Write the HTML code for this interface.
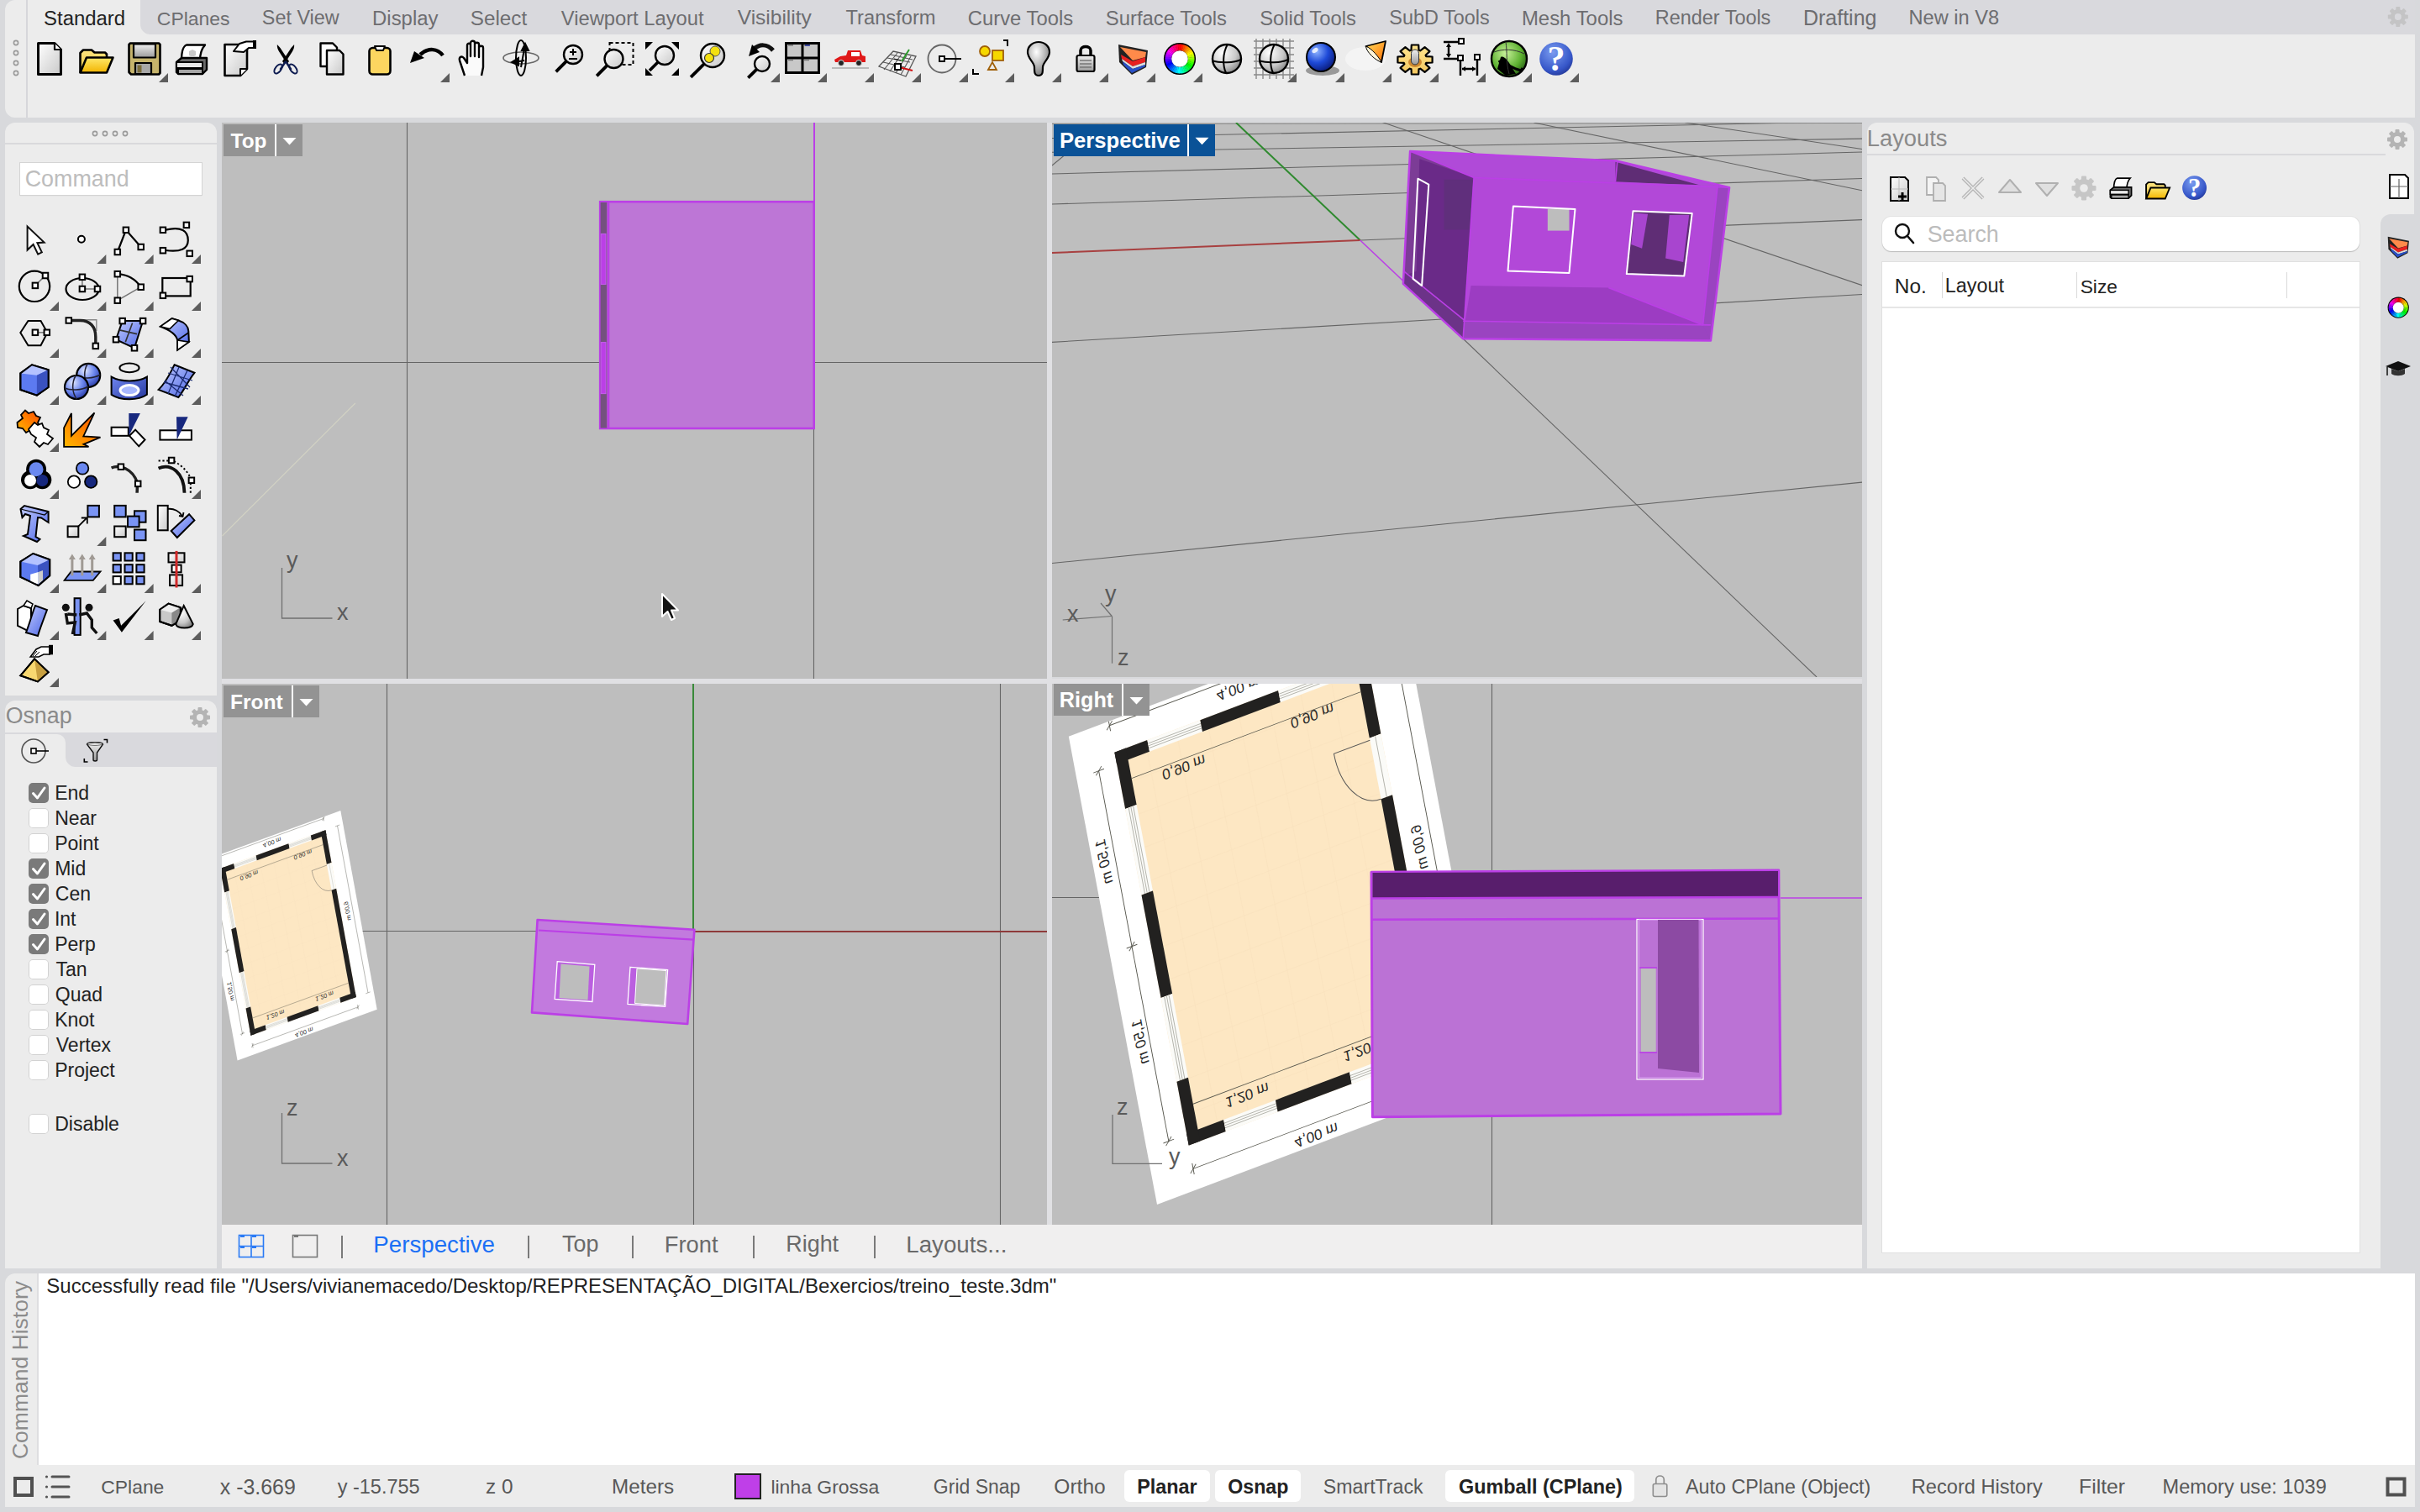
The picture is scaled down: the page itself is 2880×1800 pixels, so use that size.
<!DOCTYPE html><html><head><meta charset="utf-8"><style>
html,body{margin:0;padding:0;}
body{width:2880px;height:1800px;position:relative;overflow:hidden;background:#d8d9dc;font-family:"Liberation Sans", sans-serif;}
</style></head><body>
<div style="position:absolute;left:264px;top:146px;width:982px;height:662px;overflow:hidden;background:#bebebe;"><svg width="982" height="662" viewBox="264 146 982 662" style="position:absolute;left:0;top:0"><line x1="484.5" y1="146" x2="484.5" y2="808" stroke="#656565" stroke-width="1.1"/><line x1="968.5" y1="511" x2="968.5" y2="808" stroke="#656565" stroke-width="1.1"/><line x1="264" y1="431.5" x2="1246" y2="431.5" stroke="#656565" stroke-width="1.1"/><line x1="264.5" y1="638" x2="422.8" y2="480" stroke="#d2d2c4" stroke-width="1.2"/><line x1="969" y1="146" x2="969" y2="240" stroke="#bb3fe6" stroke-width="2"/><rect x="714.2" y="240.2" width="254.5" height="269.8" fill="#bd76d6" stroke="#bb3fe6" stroke-width="2.6"/><rect x="714.6" y="241" width="7.8" height="268.5" fill="#74517f"/><line x1="724" y1="241" x2="724" y2="510" stroke="#bb3fe6" stroke-width="2.6"/><rect x="715.2" y="278.4" width="5.8" height="60" fill="#bb3fe6" stroke="#c55fec" stroke-width="1"/><rect x="715.2" y="407.6" width="5.8" height="61" fill="#bb3fe6" stroke="#c55fec" stroke-width="1"/><path d="M335.5 676 L335.5 736 L395.5 736" fill="none" stroke="#707070" stroke-width="1.3"/><text x="341" y="676" font-size="27" fill="#5a5a5a" font-family="Liberation Sans">y</text><text x="401" y="738" font-size="27" fill="#5a5a5a" font-family="Liberation Sans">x</text><path d="M788 707 L788 734 L794.5 728 L799 738 L803 736 L799 726.5 L807 726.5 Z" fill="#111" stroke="#fff" stroke-width="2" stroke-linejoin="round"/></svg></div>
<div style="position:absolute;left:1252px;top:146px;width:964px;height:660px;overflow:hidden;background:#bebebe;"><svg width="964" height="660" viewBox="1252 146 964 660" style="position:absolute;left:0;top:0"><line x1="1252" y1="407.4" x2="2216" y2="350.524" stroke="#656565" stroke-width="1.05"/><line x1="1618.7" y1="286.0" x2="2216" y2="261.63016" stroke="#656565" stroke-width="1.05"/><line x1="1252" y1="243.0" x2="2216" y2="212.5376" stroke="#656565" stroke-width="1.05"/><line x1="1252" y1="207.0" x2="2216" y2="181.0684" stroke="#656565" stroke-width="1.05"/><line x1="1252" y1="181.2398" x2="2216" y2="165.141" stroke="#656565" stroke-width="1.05"/><line x1="1252" y1="164.574" x2="2216" y2="144.32999999999998" stroke="#656565" stroke-width="1.05"/><line x1="1252" y1="670.5" x2="2216" y2="574.1" stroke="#656565" stroke-width="1.05"/><line x1="1252" y1="147.5" x2="2216" y2="146.5" stroke="#8a8a8a" stroke-width="1"/><line x1="1560" y1="116.6" x2="2216" y2="339.64" stroke="#656565" stroke-width="1.05"/><line x1="1825.4" y1="146.0" x2="2216" y2="226.69795999999997" stroke="#656565" stroke-width="1.05"/><line x1="2005.5" y1="146.0" x2="2216" y2="177.575" stroke="#656565" stroke-width="1.05"/><line x1="1741" y1="403" x2="2162" y2="806" stroke="#656565" stroke-width="1.05"/><line x1="1252" y1="197" x2="1275" y2="178" stroke="#656565" stroke-width="1.05"/><line x1="1471" y1="146" x2="1618.7" y2="286" stroke="#2f8a2f" stroke-width="2"/><line x1="1252" y1="301" x2="1618.7" y2="286" stroke="#a84040" stroke-width="2"/><line x1="1618.7" y1="286" x2="1669.4" y2="334" stroke="#bb3fe6" stroke-width="1.6"/><line x1="1264.7" y1="738" x2="1323.2" y2="733.5" stroke="#707070" stroke-width="1.2"/><line x1="1310" y1="718" x2="1323.2" y2="733.5" stroke="#707070" stroke-width="1.2"/><line x1="1323.5" y1="733.5" x2="1323.5" y2="789.7" stroke="#707070" stroke-width="1.2"/><text x="1270" y="740" font-size="27" fill="#5a5a5a" font-family="Liberation Sans">x</text><text x="1315" y="716" font-size="27" fill="#5a5a5a" font-family="Liberation Sans">y</text><text x="1330" y="792" font-size="27" fill="#5a5a5a" font-family="Liberation Sans">z</text><polygon points="1678.1,179.9 1924.8,191.6 2058.1,223.2 2035.9,405.6 1741.2,403.3 1669.9,337.8" fill="#b04ad8" stroke="none" stroke-width="0" fill-opacity="1" stroke-linejoin="round"/><polygon points="1678.1,179.9 1754.1,211.5 1741.2,403.3 1669.9,337.8" fill="#7c3c96" stroke="none" stroke-width="0" fill-opacity="1" stroke-linejoin="round"/><polygon points="1689.3,189.3 1752.9,210.8 1742.6,381.1 1675.7,326.6 1685.6,323.1" fill="#6a2a88" stroke="none" stroke-width="0" fill-opacity="1" stroke-linejoin="round"/><polygon points="1718.5,213.8 1752.9,213.8 1749.4,273.5 1718.5,273.5" fill="#5e3278" stroke="none" stroke-width="0" fill-opacity="0.75" stroke-linejoin="round"/><polygon points="1922.5,192.8 2024.2,220.8 1922.5,216.2" fill="#5f2d75" stroke="none" stroke-width="0" fill-opacity="1" stroke-linejoin="round"/><polygon points="1754.1,211.5 2044.1,220.8 2026.6,386.9 1743.6,382.2" fill="#b248d8" stroke="none" stroke-width="0" fill-opacity="1" stroke-linejoin="round"/><polygon points="1750.6,340.1 1914.3,342.5 2026.6,386.9 1743.6,382.2" fill="#9c3cc2" stroke="none" stroke-width="0" fill-opacity="1" stroke-linejoin="round"/><polygon points="1741.2,382.2 2035.9,386.9 2035.9,405.6 1741.2,403.3" fill="#9a44c0" stroke="none" stroke-width="0" fill-opacity="1" stroke-linejoin="round"/><polygon points="1669.9,337.8 1670.3,322.6 1742.6,381.1 1741.2,403.3" fill="#6c3388" stroke="none" stroke-width="0" fill-opacity="1" stroke-linejoin="round"/><polygon points="2044.1,220.8 2058.1,223.2 2035.9,405.6 2026.6,386.9" fill="#9a44c0" stroke="none" stroke-width="0" fill-opacity="1" stroke-linejoin="round"/><polygon points="1841.8,248.9 1867.5,248.9 1867.5,274.6 1841.8,274.6" fill="#bdbdbd" stroke="none" stroke-width="0" fill-opacity="1" stroke-linejoin="round"/><polygon points="1943.5,251.2 2013.7,254.1 2004.3,328.4 1935.8,326.1" fill="#5f2d75" stroke="none" stroke-width="0" fill-opacity="1" stroke-linejoin="round"/><polygon points="1986.8,255.9 2010.2,255.9 2003.2,312.1 1982.1,307.4" fill="#a845cf" stroke="none" stroke-width="0" fill-opacity="1" stroke-linejoin="round"/><polygon points="1944.7,253.6 1961.1,254.8 1954.1,295.7 1941.2,291.0" fill="#a845cf" stroke="none" stroke-width="0" fill-opacity="1" stroke-linejoin="round"/><polygon points="1678.1,179.9 1924.8,191.6 2058.1,223.2 2035.9,405.6 1741.2,403.3 1669.9,337.8" fill="none" stroke="#bb3fe6" stroke-width="2.5" fill-opacity="1" stroke-linejoin="round"/><line x1="1678.1" y1="179.9" x2="1754.1" y2="211.5" stroke="#bb3fe6" stroke-width="1.6"/><line x1="1754.1" y1="211.5" x2="2058.1" y2="223.2" stroke="#bb3fe6" stroke-width="1.6"/><line x1="1754.1" y1="211.5" x2="1741.2" y2="403.3" stroke="#bb3fe6" stroke-width="1.6"/><line x1="1741.2" y1="382.2" x2="2035.9" y2="386.9" stroke="#bb3fe6" stroke-width="1.6"/><line x1="1914.3" y1="342.5" x2="2026.6" y2="386.9" stroke="#bb3fe6" stroke-width="1.6"/><line x1="1924.8" y1="191.6" x2="1922.5" y2="216.2" stroke="#bb3fe6" stroke-width="1.6"/><line x1="1670.3" y1="322.6" x2="1742.6" y2="381.1" stroke="#bb3fe6" stroke-width="1.6"/><line x1="2044.1" y1="220.8" x2="2026.6" y2="386.9" stroke="#bb3fe6" stroke-width="1.6"/><polygon points="1800.9,245.4 1874.5,248.9 1867.5,324.9 1794.5,322.6" fill="none" stroke="#fff" stroke-width="2" fill-opacity="1" stroke-linejoin="round"/><polygon points="1943.5,251.2 2013.7,254.1 2004.3,328.4 1935.8,326.1" fill="none" stroke="#fff" stroke-width="2" fill-opacity="1" stroke-linejoin="round"/><polygon points="1687.4,212.7 1700.3,219.7 1692.1,340.1 1681.6,331.9" fill="none" stroke="#fff" stroke-width="2" fill-opacity="1" stroke-linejoin="round"/></svg></div>
<div style="position:absolute;left:264px;top:814px;width:982px;height:644px;overflow:hidden;background:#bebebe;"><svg width="982" height="644" viewBox="264 814 982 644" style="position:absolute;left:0;top:0"><line x1="460.5" y1="814" x2="460.5" y2="1458" stroke="#656565" stroke-width="1.1"/><line x1="825.5" y1="1109" x2="825.5" y2="1458" stroke="#656565" stroke-width="1.1"/><line x1="1190.5" y1="814" x2="1190.5" y2="1458" stroke="#656565" stroke-width="1.1"/><line x1="264" y1="1108.5" x2="825.5" y2="1108.5" stroke="#656565" stroke-width="1.1"/><line x1="825" y1="814" x2="825" y2="1109" stroke="#3a8a3a" stroke-width="2"/><line x1="825" y1="1109" x2="1246" y2="1109" stroke="#8e3a3a" stroke-width="2"/><g transform="matrix(0.33220,-0.12140,0.06382,0.34824,239.2,1025.6)"><rect x="0" y="0" width="500" height="680" fill="#ffffff"/><rect x="60" y="45" width="377.5" height="571" fill="#fde7c3"/><line x1="60" y1="93" x2="437.5" y2="93" stroke="#f9e2be" stroke-width="0.7"/><line x1="60" y1="141" x2="437.5" y2="141" stroke="#f9e2be" stroke-width="0.7"/><line x1="60" y1="189" x2="437.5" y2="189" stroke="#f9e2be" stroke-width="0.7"/><line x1="60" y1="237" x2="437.5" y2="237" stroke="#f9e2be" stroke-width="0.7"/><line x1="60" y1="285" x2="437.5" y2="285" stroke="#f9e2be" stroke-width="0.7"/><line x1="60" y1="333" x2="437.5" y2="333" stroke="#f9e2be" stroke-width="0.7"/><line x1="60" y1="381" x2="437.5" y2="381" stroke="#f9e2be" stroke-width="0.7"/><line x1="60" y1="429" x2="437.5" y2="429" stroke="#f9e2be" stroke-width="0.7"/><line x1="60" y1="477" x2="437.5" y2="477" stroke="#f9e2be" stroke-width="0.7"/><line x1="60" y1="525" x2="437.5" y2="525" stroke="#f9e2be" stroke-width="0.7"/><line x1="60" y1="573" x2="437.5" y2="573" stroke="#f9e2be" stroke-width="0.7"/><line x1="106" y1="45" x2="106" y2="616" stroke="#f9e2be" stroke-width="0.7"/><line x1="152" y1="45" x2="152" y2="616" stroke="#f9e2be" stroke-width="0.7"/><line x1="198" y1="45" x2="198" y2="616" stroke="#f9e2be" stroke-width="0.7"/><line x1="244" y1="45" x2="244" y2="616" stroke="#f9e2be" stroke-width="0.7"/><line x1="290" y1="45" x2="290" y2="616" stroke="#f9e2be" stroke-width="0.7"/><line x1="336" y1="45" x2="336" y2="616" stroke="#f9e2be" stroke-width="0.7"/><line x1="382" y1="45" x2="382" y2="616" stroke="#f9e2be" stroke-width="0.7"/><line x1="428" y1="45" x2="428" y2="616" stroke="#f9e2be" stroke-width="0.7"/><rect x="60.0" y="45" width="49.1" height="17" fill="#222120"/><rect x="109.1" y="45" width="79.3" height="17" fill="#fbfbf8"/><line x1="109.1" y1="50.1" x2="188.4" y2="50.1" stroke="#9a9a90" stroke-width="0.8"/><line x1="109.1" y1="53.5" x2="188.4" y2="53.5" stroke="#9a9a90" stroke-width="0.8"/><line x1="109.1" y1="56.9" x2="188.4" y2="56.9" stroke="#9a9a90" stroke-width="0.8"/><rect x="188.4" y="45" width="117.0" height="17" fill="#222120"/><rect x="305.4" y="45" width="79.3" height="17" fill="#fbfbf8"/><line x1="305.4" y1="50.1" x2="384.6" y2="50.1" stroke="#9a9a90" stroke-width="0.8"/><line x1="305.4" y1="53.5" x2="384.6" y2="53.5" stroke="#9a9a90" stroke-width="0.8"/><line x1="305.4" y1="56.9" x2="384.6" y2="56.9" stroke="#9a9a90" stroke-width="0.8"/><rect x="384.6" y="45" width="52.9" height="17" fill="#222120"/><rect x="60.0" y="599" width="55.5" height="17" fill="#222120"/><rect x="115.5" y="599" width="77.8" height="17" fill="#fbfbf8"/><line x1="115.5" y1="604.1" x2="193.3" y2="604.1" stroke="#9a9a90" stroke-width="0.8"/><line x1="115.5" y1="607.5" x2="193.3" y2="607.5" stroke="#9a9a90" stroke-width="0.8"/><line x1="115.5" y1="610.9" x2="193.3" y2="610.9" stroke="#9a9a90" stroke-width="0.8"/><rect x="193.3" y="599" width="111.0" height="17" fill="#222120"/><rect x="304.2" y="599" width="77.8" height="17" fill="#fbfbf8"/><line x1="304.2" y1="604.1" x2="382.0" y2="604.1" stroke="#9a9a90" stroke-width="0.8"/><line x1="304.2" y1="607.5" x2="382.0" y2="607.5" stroke="#9a9a90" stroke-width="0.8"/><line x1="304.2" y1="610.9" x2="382.0" y2="610.9" stroke="#9a9a90" stroke-width="0.8"/><rect x="382.0" y="599" width="55.5" height="17" fill="#222120"/><rect x="60" y="45.0" width="17" height="82.2" fill="#222120"/><rect x="60" y="127.2" width="17" height="125.0" fill="#fbfbf8"/><line x1="65.1" y1="127.2" x2="65.1" y2="252.3" stroke="#9a9a90" stroke-width="0.8"/><line x1="68.5" y1="127.2" x2="68.5" y2="252.3" stroke="#9a9a90" stroke-width="0.8"/><line x1="71.9" y1="127.2" x2="71.9" y2="252.3" stroke="#9a9a90" stroke-width="0.8"/><rect x="60" y="252.3" width="17" height="149.6" fill="#222120"/><rect x="60" y="401.9" width="17" height="121.6" fill="#fbfbf8"/><line x1="65.1" y1="401.9" x2="65.1" y2="523.5" stroke="#9a9a90" stroke-width="0.8"/><line x1="68.5" y1="401.9" x2="68.5" y2="523.5" stroke="#9a9a90" stroke-width="0.8"/><line x1="71.9" y1="401.9" x2="71.9" y2="523.5" stroke="#9a9a90" stroke-width="0.8"/><rect x="60" y="523.5" width="17" height="92.5" fill="#222120"/><rect x="420.5" y="45.0" width="17" height="111.3" fill="#222120"/><rect x="420.5" y="156.3" width="17" height="88.5" fill="#fbfbf8"/><line x1="429.0" y1="156.3" x2="429.0" y2="244.8" stroke="#9a9a90" stroke-width="0.8"/><rect x="420.5" y="244.8" width="17" height="371.1" fill="#222120"/><path d="M420.5 159.3 L366.5 159.3 A54 85.5 0 0 0 420.5 244.8" fill="none" stroke="#555" stroke-width="1.2"/><line x1="60" y1="6" x2="437.5" y2="6" stroke="#55554c" stroke-width="1.1"/><line x1="60" y1="650" x2="437.5" y2="650" stroke="#55554c" stroke-width="1.1"/><line x1="33" y1="62" x2="33" y2="600" stroke="#55554c" stroke-width="1.1"/><line x1="480" y1="45" x2="480" y2="616" stroke="#55554c" stroke-width="1.1"/><line x1="77" y1="89" x2="420.5" y2="89" stroke="#55554c" stroke-width="1.1"/><line x1="77" y1="562" x2="420.5" y2="562" stroke="#55554c" stroke-width="1.1"/><line x1="60" y1="0" x2="60" y2="14" stroke="#55554c" stroke-width="1.1"/><line x1="437.5" y1="0" x2="437.5" y2="14" stroke="#55554c" stroke-width="1.1"/><line x1="55" y1="11" x2="65" y2="1" stroke="#55554c" stroke-width="1.1"/><line x1="432.5" y1="11" x2="442.5" y2="1" stroke="#55554c" stroke-width="1.1"/><line x1="60" y1="642" x2="60" y2="658" stroke="#55554c" stroke-width="1.1"/><line x1="437.5" y1="642" x2="437.5" y2="658" stroke="#55554c" stroke-width="1.1"/><line x1="55" y1="655" x2="65" y2="645" stroke="#55554c" stroke-width="1.1"/><line x1="432.5" y1="655" x2="442.5" y2="645" stroke="#55554c" stroke-width="1.1"/><line x1="25" y1="62" x2="41" y2="62" stroke="#55554c" stroke-width="1.1"/><line x1="25" y1="317" x2="41" y2="317" stroke="#55554c" stroke-width="1.1"/><line x1="25" y1="600" x2="41" y2="600" stroke="#55554c" stroke-width="1.1"/><line x1="28" y1="67" x2="38" y2="57" stroke="#55554c" stroke-width="1.1"/><line x1="28" y1="322" x2="38" y2="312" stroke="#55554c" stroke-width="1.1"/><line x1="28" y1="605" x2="38" y2="595" stroke="#55554c" stroke-width="1.1"/><line x1="472" y1="45" x2="488" y2="45" stroke="#55554c" stroke-width="1.1"/><line x1="472" y1="616" x2="488" y2="616" stroke="#55554c" stroke-width="1.1"/><g transform="translate(250,22) rotate(0) scale(1,-1)"><text x="0" y="7.5" text-anchor="middle" font-family="Liberation Sans" fill="#2a2a2a" font-size="21">4,00 m</text></g><g transform="translate(241,668) rotate(0) scale(1,-1)"><text x="0" y="7.5" text-anchor="middle" font-family="Liberation Sans" fill="#2a2a2a" font-size="21">4,00 m</text></g><g transform="translate(153,101) rotate(0) scale(1,-1)"><text x="0" y="7.5" text-anchor="middle" font-family="Liberation Sans" fill="#2a2a2a" font-size="21">0,90 m</text></g><g transform="translate(346,97) rotate(0) scale(1,-1)"><text x="0" y="7.5" text-anchor="middle" font-family="Liberation Sans" fill="#2a2a2a" font-size="21">0,90 m</text></g><g transform="translate(155,578) rotate(0) scale(1,-1)"><text x="0" y="7.5" text-anchor="middle" font-family="Liberation Sans" fill="#2a2a2a" font-size="21">1,20 m</text></g><g transform="translate(332,576) rotate(0) scale(1,-1)"><text x="0" y="7.5" text-anchor="middle" font-family="Liberation Sans" fill="#2a2a2a" font-size="21">1,20 m</text></g><g transform="translate(16,188) rotate(90) scale(1,-1)"><text x="0" y="7.5" text-anchor="middle" font-family="Liberation Sans" fill="#2a2a2a" font-size="21">1,50 m</text></g><g transform="translate(19,451) rotate(90) scale(1,-1)"><text x="0" y="7.5" text-anchor="middle" font-family="Liberation Sans" fill="#2a2a2a" font-size="21">1,50 m</text></g><g transform="translate(461,330) rotate(90) scale(1,-1)"><text x="0" y="7.5" text-anchor="middle" font-family="Liberation Sans" fill="#2a2a2a" font-size="21">6,00 m</text></g></g><polygon points="639.6,1095 826.4,1106.7 818.2,1219 633,1205.4" fill="#c27ade" stroke="#bb3fe6" stroke-width="2.6" stroke-linejoin="round"/><line x1="640.9" y1="1107.5" x2="825.6" y2="1118.6" stroke="#bb3fe6" stroke-width="2.2"/><polygon points="663.2,1144.6 707.8,1148.4 704.9,1192.5 660.2,1189.3" fill="#bb5fe0" stroke="#fff" stroke-width="1.3"/><polygon points="667.5,1147.5 701.5,1150.5 699.5,1190.5 665.5,1188" fill="#bdbdbd"/><polygon points="750,1151.3 794.6,1154.6 791.6,1198.4 747,1195.5" fill="#bb5fe0" stroke="#fff" stroke-width="1.3"/><polygon points="758,1153 793,1155.5 790.5,1197 755.5,1194.5" fill="#bdbdbd"/><polygon points="758,1153 793,1155.5 790.5,1197 755.5,1194.5" fill="none" stroke="#fff" stroke-width="1"/><path d="M335.5 1325 L335.5 1385 L395.5 1385" fill="none" stroke="#707070" stroke-width="1.3"/><text x="341" y="1328" font-size="27" fill="#5a5a5a" font-family="Liberation Sans">z</text><text x="401" y="1388" font-size="27" fill="#5a5a5a" font-family="Liberation Sans">x</text></svg></div>
<div style="position:absolute;left:1252px;top:812px;width:964px;height:646px;overflow:hidden;background:#bebebe;"><svg width="964" height="646" viewBox="1252 812 964 646" style="position:absolute;left:0;top:0"><line x1="1775.5" y1="812" x2="1775.5" y2="1458" stroke="#656565" stroke-width="1.1"/><line x1="1252" y1="1068.5" x2="1400" y2="1068.5" stroke="#656565" stroke-width="1.1"/><g transform="matrix(0.79400,-0.30000,0.15471,0.81941,1271.8,876.8)"><rect x="0" y="0" width="500" height="680" fill="#ffffff"/><rect x="60" y="45" width="377.5" height="571" fill="#fde7c3"/><line x1="60" y1="93" x2="437.5" y2="93" stroke="#f9e2be" stroke-width="0.7"/><line x1="60" y1="141" x2="437.5" y2="141" stroke="#f9e2be" stroke-width="0.7"/><line x1="60" y1="189" x2="437.5" y2="189" stroke="#f9e2be" stroke-width="0.7"/><line x1="60" y1="237" x2="437.5" y2="237" stroke="#f9e2be" stroke-width="0.7"/><line x1="60" y1="285" x2="437.5" y2="285" stroke="#f9e2be" stroke-width="0.7"/><line x1="60" y1="333" x2="437.5" y2="333" stroke="#f9e2be" stroke-width="0.7"/><line x1="60" y1="381" x2="437.5" y2="381" stroke="#f9e2be" stroke-width="0.7"/><line x1="60" y1="429" x2="437.5" y2="429" stroke="#f9e2be" stroke-width="0.7"/><line x1="60" y1="477" x2="437.5" y2="477" stroke="#f9e2be" stroke-width="0.7"/><line x1="60" y1="525" x2="437.5" y2="525" stroke="#f9e2be" stroke-width="0.7"/><line x1="60" y1="573" x2="437.5" y2="573" stroke="#f9e2be" stroke-width="0.7"/><line x1="106" y1="45" x2="106" y2="616" stroke="#f9e2be" stroke-width="0.7"/><line x1="152" y1="45" x2="152" y2="616" stroke="#f9e2be" stroke-width="0.7"/><line x1="198" y1="45" x2="198" y2="616" stroke="#f9e2be" stroke-width="0.7"/><line x1="244" y1="45" x2="244" y2="616" stroke="#f9e2be" stroke-width="0.7"/><line x1="290" y1="45" x2="290" y2="616" stroke="#f9e2be" stroke-width="0.7"/><line x1="336" y1="45" x2="336" y2="616" stroke="#f9e2be" stroke-width="0.7"/><line x1="382" y1="45" x2="382" y2="616" stroke="#f9e2be" stroke-width="0.7"/><line x1="428" y1="45" x2="428" y2="616" stroke="#f9e2be" stroke-width="0.7"/><rect x="60.0" y="45" width="49.1" height="17" fill="#222120"/><rect x="109.1" y="45" width="79.3" height="17" fill="#fbfbf8"/><line x1="109.1" y1="50.1" x2="188.4" y2="50.1" stroke="#9a9a90" stroke-width="0.8"/><line x1="109.1" y1="53.5" x2="188.4" y2="53.5" stroke="#9a9a90" stroke-width="0.8"/><line x1="109.1" y1="56.9" x2="188.4" y2="56.9" stroke="#9a9a90" stroke-width="0.8"/><rect x="188.4" y="45" width="117.0" height="17" fill="#222120"/><rect x="305.4" y="45" width="79.3" height="17" fill="#fbfbf8"/><line x1="305.4" y1="50.1" x2="384.6" y2="50.1" stroke="#9a9a90" stroke-width="0.8"/><line x1="305.4" y1="53.5" x2="384.6" y2="53.5" stroke="#9a9a90" stroke-width="0.8"/><line x1="305.4" y1="56.9" x2="384.6" y2="56.9" stroke="#9a9a90" stroke-width="0.8"/><rect x="384.6" y="45" width="52.9" height="17" fill="#222120"/><rect x="60.0" y="599" width="55.5" height="17" fill="#222120"/><rect x="115.5" y="599" width="77.8" height="17" fill="#fbfbf8"/><line x1="115.5" y1="604.1" x2="193.3" y2="604.1" stroke="#9a9a90" stroke-width="0.8"/><line x1="115.5" y1="607.5" x2="193.3" y2="607.5" stroke="#9a9a90" stroke-width="0.8"/><line x1="115.5" y1="610.9" x2="193.3" y2="610.9" stroke="#9a9a90" stroke-width="0.8"/><rect x="193.3" y="599" width="111.0" height="17" fill="#222120"/><rect x="304.2" y="599" width="77.8" height="17" fill="#fbfbf8"/><line x1="304.2" y1="604.1" x2="382.0" y2="604.1" stroke="#9a9a90" stroke-width="0.8"/><line x1="304.2" y1="607.5" x2="382.0" y2="607.5" stroke="#9a9a90" stroke-width="0.8"/><line x1="304.2" y1="610.9" x2="382.0" y2="610.9" stroke="#9a9a90" stroke-width="0.8"/><rect x="382.0" y="599" width="55.5" height="17" fill="#222120"/><rect x="60" y="45.0" width="17" height="82.2" fill="#222120"/><rect x="60" y="127.2" width="17" height="125.0" fill="#fbfbf8"/><line x1="65.1" y1="127.2" x2="65.1" y2="252.3" stroke="#9a9a90" stroke-width="0.8"/><line x1="68.5" y1="127.2" x2="68.5" y2="252.3" stroke="#9a9a90" stroke-width="0.8"/><line x1="71.9" y1="127.2" x2="71.9" y2="252.3" stroke="#9a9a90" stroke-width="0.8"/><rect x="60" y="252.3" width="17" height="149.6" fill="#222120"/><rect x="60" y="401.9" width="17" height="121.6" fill="#fbfbf8"/><line x1="65.1" y1="401.9" x2="65.1" y2="523.5" stroke="#9a9a90" stroke-width="0.8"/><line x1="68.5" y1="401.9" x2="68.5" y2="523.5" stroke="#9a9a90" stroke-width="0.8"/><line x1="71.9" y1="401.9" x2="71.9" y2="523.5" stroke="#9a9a90" stroke-width="0.8"/><rect x="60" y="523.5" width="17" height="92.5" fill="#222120"/><rect x="420.5" y="45.0" width="17" height="111.3" fill="#222120"/><rect x="420.5" y="156.3" width="17" height="88.5" fill="#fbfbf8"/><line x1="429.0" y1="156.3" x2="429.0" y2="244.8" stroke="#9a9a90" stroke-width="0.8"/><rect x="420.5" y="244.8" width="17" height="371.1" fill="#222120"/><path d="M420.5 159.3 L366.5 159.3 A54 85.5 0 0 0 420.5 244.8" fill="none" stroke="#555" stroke-width="1.2"/><line x1="60" y1="6" x2="437.5" y2="6" stroke="#55554c" stroke-width="1.1"/><line x1="60" y1="650" x2="437.5" y2="650" stroke="#55554c" stroke-width="1.1"/><line x1="33" y1="62" x2="33" y2="600" stroke="#55554c" stroke-width="1.1"/><line x1="480" y1="45" x2="480" y2="616" stroke="#55554c" stroke-width="1.1"/><line x1="77" y1="89" x2="420.5" y2="89" stroke="#55554c" stroke-width="1.1"/><line x1="77" y1="562" x2="420.5" y2="562" stroke="#55554c" stroke-width="1.1"/><line x1="60" y1="0" x2="60" y2="14" stroke="#55554c" stroke-width="1.1"/><line x1="437.5" y1="0" x2="437.5" y2="14" stroke="#55554c" stroke-width="1.1"/><line x1="55" y1="11" x2="65" y2="1" stroke="#55554c" stroke-width="1.1"/><line x1="432.5" y1="11" x2="442.5" y2="1" stroke="#55554c" stroke-width="1.1"/><line x1="60" y1="642" x2="60" y2="658" stroke="#55554c" stroke-width="1.1"/><line x1="437.5" y1="642" x2="437.5" y2="658" stroke="#55554c" stroke-width="1.1"/><line x1="55" y1="655" x2="65" y2="645" stroke="#55554c" stroke-width="1.1"/><line x1="432.5" y1="655" x2="442.5" y2="645" stroke="#55554c" stroke-width="1.1"/><line x1="25" y1="62" x2="41" y2="62" stroke="#55554c" stroke-width="1.1"/><line x1="25" y1="317" x2="41" y2="317" stroke="#55554c" stroke-width="1.1"/><line x1="25" y1="600" x2="41" y2="600" stroke="#55554c" stroke-width="1.1"/><line x1="28" y1="67" x2="38" y2="57" stroke="#55554c" stroke-width="1.1"/><line x1="28" y1="322" x2="38" y2="312" stroke="#55554c" stroke-width="1.1"/><line x1="28" y1="605" x2="38" y2="595" stroke="#55554c" stroke-width="1.1"/><line x1="472" y1="45" x2="488" y2="45" stroke="#55554c" stroke-width="1.1"/><line x1="472" y1="616" x2="488" y2="616" stroke="#55554c" stroke-width="1.1"/><g transform="translate(250,22) rotate(0) scale(1,-1)"><text x="0" y="7.5" text-anchor="middle" font-family="Liberation Sans" fill="#2a2a2a" font-size="21">4,00 m</text></g><g transform="translate(241,668) rotate(0) scale(1,-1)"><text x="0" y="7.5" text-anchor="middle" font-family="Liberation Sans" fill="#2a2a2a" font-size="21">4,00 m</text></g><g transform="translate(153,101) rotate(0) scale(1,-1)"><text x="0" y="7.5" text-anchor="middle" font-family="Liberation Sans" fill="#2a2a2a" font-size="21">0,90 m</text></g><g transform="translate(346,97) rotate(0) scale(1,-1)"><text x="0" y="7.5" text-anchor="middle" font-family="Liberation Sans" fill="#2a2a2a" font-size="21">0,90 m</text></g><g transform="translate(155,578) rotate(0) scale(1,-1)"><text x="0" y="7.5" text-anchor="middle" font-family="Liberation Sans" fill="#2a2a2a" font-size="21">1,20 m</text></g><g transform="translate(332,576) rotate(0) scale(1,-1)"><text x="0" y="7.5" text-anchor="middle" font-family="Liberation Sans" fill="#2a2a2a" font-size="21">1,20 m</text></g><g transform="translate(16,188) rotate(90) scale(1,-1)"><text x="0" y="7.5" text-anchor="middle" font-family="Liberation Sans" fill="#2a2a2a" font-size="21">1,50 m</text></g><g transform="translate(19,451) rotate(90) scale(1,-1)"><text x="0" y="7.5" text-anchor="middle" font-family="Liberation Sans" fill="#2a2a2a" font-size="21">1,50 m</text></g><g transform="translate(461,330) rotate(90) scale(1,-1)"><text x="0" y="7.5" text-anchor="middle" font-family="Liberation Sans" fill="#2a2a2a" font-size="21">6,00 m</text></g></g><line x1="2119" y1="1069" x2="2216" y2="1069" stroke="#bb3fe6" stroke-width="1.6"/><polygon points="1632,1038.3 2116.8,1036 2119,1326 1633.4,1329.7" fill="#bb72d5" stroke="#bb3fe6" stroke-width="3" stroke-linejoin="round"/><polygon points="1633.5,1039 2116,1037 2116,1068.5 1633.5,1069.5" fill="#581e6c"/><line x1="1633" y1="1069.5" x2="2117" y2="1068" stroke="#bb3fe6" stroke-width="2.6"/><line x1="1633" y1="1094.8" x2="2117" y2="1093.5" stroke="#bb3fe6" stroke-width="2.6"/><rect x="1948" y="1094.5" width="79" height="190.5" fill="none" stroke="#fff" stroke-width="1.2"/><rect x="1950.5" y="1095" width="74" height="188" fill="none" stroke="#d9a0f0" stroke-width="1"/><polygon points="1973,1095 2021.5,1095 2022,1277 1973,1272" fill="#8c4aa3"/><rect x="1952.7" y="1153" width="18" height="99" fill="#bdbdbd"/><line x1="1951" y1="1152" x2="1972" y2="1152" stroke="#bb3fe6" stroke-width="1.6"/><line x1="1951" y1="1253" x2="1972" y2="1253" stroke="#bb3fe6" stroke-width="1.6"/><path d="M1324 1327 L1324 1385.4 L1383 1385.4" fill="none" stroke="#707070" stroke-width="1.3"/><text x="1329" y="1327" font-size="27" fill="#5a5a5a" font-family="Liberation Sans">z</text><text x="1391" y="1386" font-size="27" fill="#5a5a5a" font-family="Liberation Sans">y</text></svg></div>
<div style="position:absolute;left:6px;top:0px;width:2868px;height:140px;background:#ececec;border-radius:12px 0 0 12px;"></div>
<div style="position:absolute;left:167px;top:0px;width:2707px;height:41px;background:#d9d9dd;border-bottom-left-radius:12px;"></div>
<div style="position:absolute;left:31px;top:0px;width:2px;height:140px;background:#d6d6da;"></div>
<div style="position:absolute;left:6px;top:146px;width:252px;height:682px;background:#ececec;border-radius:12px 12px 0 0;"></div>
<div style="position:absolute;left:6px;top:170px;width:252px;height:2px;background:#d9d9dc;"></div>
<div style="position:absolute;left:24px;top:194px;width:216px;height:38px;background:#fff;box-shadow:0 0 0 1px #d4d4d4, 0 1px 1px #c8c8c8;"></div>
<div style="position:absolute;left:6px;top:834px;width:252px;height:676px;background:#ececec;border-radius:12px 12px 0 0;"></div>
<div style="position:absolute;left:78px;top:872px;width:180px;height:41px;background:#d9d9dd;border-bottom-left-radius:12px;"></div>
<div style="position:absolute;left:6px;top:872px;width:72px;height:2px;background:#d9d9dd;"></div>
<div style="position:absolute;left:64px;top:872px;width:14px;height:14px;background:#d9d9dd;"></div>
<div style="position:absolute;left:6px;top:874px;width:72px;height:39px;background:#ececec;border-top-right-radius:10px;"></div>
<div style="position:absolute;left:34px;top:932px;width:24px;height:24px;background:#7a7a7a;border-radius:5px;"></div>
<div style="position:absolute;left:34px;top:962px;width:24px;height:24px;background:#fff;border-radius:5px;box-shadow:inset 0 0 0 1px #d2d2d2;"></div>
<div style="position:absolute;left:34px;top:992px;width:24px;height:24px;background:#fff;border-radius:5px;box-shadow:inset 0 0 0 1px #d2d2d2;"></div>
<div style="position:absolute;left:34px;top:1022px;width:24px;height:24px;background:#7a7a7a;border-radius:5px;"></div>
<div style="position:absolute;left:34px;top:1052px;width:24px;height:24px;background:#7a7a7a;border-radius:5px;"></div>
<div style="position:absolute;left:34px;top:1082px;width:24px;height:24px;background:#7a7a7a;border-radius:5px;"></div>
<div style="position:absolute;left:34px;top:1112px;width:24px;height:24px;background:#7a7a7a;border-radius:5px;"></div>
<div style="position:absolute;left:34px;top:1142px;width:24px;height:24px;background:#fff;border-radius:5px;box-shadow:inset 0 0 0 1px #d2d2d2;"></div>
<div style="position:absolute;left:34px;top:1172px;width:24px;height:24px;background:#fff;border-radius:5px;box-shadow:inset 0 0 0 1px #d2d2d2;"></div>
<div style="position:absolute;left:34px;top:1202px;width:24px;height:24px;background:#fff;border-radius:5px;box-shadow:inset 0 0 0 1px #d2d2d2;"></div>
<div style="position:absolute;left:34px;top:1232px;width:24px;height:24px;background:#fff;border-radius:5px;box-shadow:inset 0 0 0 1px #d2d2d2;"></div>
<div style="position:absolute;left:34px;top:1262px;width:24px;height:24px;background:#fff;border-radius:5px;box-shadow:inset 0 0 0 1px #d2d2d2;"></div>
<div style="position:absolute;left:34px;top:1326px;width:24px;height:24px;background:#fff;border-radius:5px;box-shadow:inset 0 0 0 1px #d2d2d2;"></div>
<div style="position:absolute;left:1246px;top:146px;width:6px;height:1312px;background:#e0e0e3;"></div>
<div style="position:absolute;left:264px;top:808px;width:1952px;height:6px;background:#e0e0e3;"></div>
<div style="position:absolute;left:264px;top:1458px;width:1952px;height:52px;background:#f0efef;"></div>
<div style="position:absolute;left:406px;top:1471px;width:2px;height:27px;background:#7a7a7a;"></div>
<div style="position:absolute;left:628px;top:1471px;width:2px;height:27px;background:#7a7a7a;"></div>
<div style="position:absolute;left:752px;top:1471px;width:2px;height:27px;background:#7a7a7a;"></div>
<div style="position:absolute;left:896px;top:1471px;width:2px;height:27px;background:#7a7a7a;"></div>
<div style="position:absolute;left:1040px;top:1471px;width:2px;height:27px;background:#7a7a7a;"></div>
<div style="position:absolute;left:2222px;top:146px;width:651px;height:1364px;background:#ececec;border-radius:12px 12px 0 0;"></div>
<div style="position:absolute;left:2833px;top:255px;width:41px;height:1255px;background:#d8d9dc;border-top-left-radius:12px;"></div>
<div style="position:absolute;left:2222px;top:183px;width:617px;height:2px;background:#d9d9dc;"></div>
<div style="position:absolute;left:2240px;top:258px;width:568px;height:41px;background:#fff;border-radius:11px;box-shadow:0 1px 1px #bdbdbd, 0 0 0 1px #e2e2e2;"></div>
<div style="position:absolute;left:2240px;top:312px;width:568px;height:1179px;background:#fff;box-shadow:0 0 0 1px #e0e0e0;"></div>
<div style="position:absolute;left:2240px;top:365px;width:568px;height:2px;background:#e6e6e6;"></div>
<div style="position:absolute;left:2311px;top:324px;width:1px;height:31px;background:#dadada;"></div>
<div style="position:absolute;left:2471px;top:324px;width:1px;height:31px;background:#dadada;"></div>
<div style="position:absolute;left:2721px;top:324px;width:1px;height:31px;background:#dadada;"></div>
<div style="position:absolute;left:6px;top:1516px;width:40px;height:228px;background:#ececec;border-radius:12px 0 0 0;"></div>
<div style="position:absolute;left:44px;top:1516px;width:2px;height:228px;background:#dedee0;"></div>
<div style="position:absolute;left:46px;top:1516px;width:2828px;height:228px;background:#fff;"></div>
<div style="position:absolute;left:23.5px;top:1631px;width:0;height:0;"><div style="position:absolute;left:0;top:0;transform:translate(-50%,-50%) rotate(-90deg);font-size:26.5px;line-height:26.5px;color:#8c8c8c;white-space:nowrap;">Command History</div></div>
<div style="position:absolute;left:6px;top:1744px;width:2868px;height:50px;background:#ececec;"></div>
<div style="position:absolute;left:1338px;top:1750px;width:102px;height:38px;background:#fff;border-radius:6px;"></div>
<div style="position:absolute;left:1446px;top:1750px;width:102px;height:38px;background:#fff;border-radius:6px;"></div>
<div style="position:absolute;left:1720px;top:1750px;width:225px;height:38px;background:#fff;border-radius:6px;"></div>
<div style="position:absolute;left:874px;top:1754px;width:32px;height:31px;background:#bf3fe8;box-shadow:inset 0 0 0 2px #222;"></div>
<div style="position:absolute;left:266px;top:148px;width:94px;height:38px;background:#939393;"></div>
<div style="position:absolute;left:327px;top:148px;width:2px;height:38px;background:#fff;"></div>
<div style="position:absolute;left:1253.5px;top:147.6px;width:192.5px;height:38.3px;background:#0a5297;"></div>
<div style="position:absolute;left:1413px;top:147.6px;width:2px;height:38.3px;background:#fff;"></div>
<div style="position:absolute;left:266px;top:816px;width:114px;height:38px;background:#939393;"></div>
<div style="position:absolute;left:347px;top:816px;width:2px;height:38px;background:#fff;"></div>
<div style="position:absolute;left:1254px;top:814px;width:114px;height:38px;background:#939393;"></div>
<div style="position:absolute;left:1335px;top:814px;width:2px;height:38px;background:#fff;"></div>
<div style="position:absolute;left:52.10px;top:9.98px;font-size:23.91px;line-height:23.91px;color:#222;font-weight:normal;white-space:nowrap;">Standard</div>
<div style="position:absolute;left:186.85px;top:10.79px;font-size:22.95px;line-height:22.95px;color:#6d6d70;font-weight:normal;white-space:nowrap;">CPlanes</div>
<div style="position:absolute;left:311.83px;top:10.43px;font-size:23.38px;line-height:23.38px;color:#6d6d70;font-weight:normal;white-space:nowrap;">Set View</div>
<div style="position:absolute;left:443.09px;top:9.98px;font-size:23.91px;line-height:23.91px;color:#6d6d70;font-weight:normal;white-space:nowrap;">Display</div>
<div style="position:absolute;left:559.79px;top:9.68px;font-size:24.26px;line-height:24.26px;color:#6d6d70;font-weight:normal;white-space:nowrap;">Select</div>
<div style="position:absolute;left:667.76px;top:10.11px;font-size:23.75px;line-height:23.75px;color:#6d6d70;font-weight:normal;white-space:nowrap;">Viewport Layout</div>
<div style="position:absolute;left:877.76px;top:9.48px;font-size:24.50px;line-height:24.50px;color:#6d6d70;font-weight:normal;white-space:nowrap;">Visibility</div>
<div style="position:absolute;left:1006.53px;top:10.15px;font-size:23.70px;line-height:23.70px;color:#6d6d70;font-weight:normal;white-space:nowrap;">Transform</div>
<div style="position:absolute;left:1151.81px;top:10.05px;font-size:23.82px;line-height:23.82px;color:#6d6d70;font-weight:normal;white-space:nowrap;">Curve Tools</div>
<div style="position:absolute;left:1315.81px;top:10.01px;font-size:23.87px;line-height:23.87px;color:#6d6d70;font-weight:normal;white-space:nowrap;">Surface Tools</div>
<div style="position:absolute;left:1499.21px;top:10.07px;font-size:23.81px;line-height:23.81px;color:#6d6d70;font-weight:normal;white-space:nowrap;">Solid Tools</div>
<div style="position:absolute;left:1653.33px;top:10.36px;font-size:23.45px;line-height:23.45px;color:#6d6d70;font-weight:normal;white-space:nowrap;">SubD Tools</div>
<div style="position:absolute;left:1810.88px;top:9.95px;font-size:23.94px;line-height:23.94px;color:#6d6d70;font-weight:normal;white-space:nowrap;">Mesh Tools</div>
<div style="position:absolute;left:1969.83px;top:10.39px;font-size:23.42px;line-height:23.42px;color:#6d6d70;font-weight:normal;white-space:nowrap;">Render Tools</div>
<div style="position:absolute;left:2145.90px;top:9.02px;font-size:25.03px;line-height:25.03px;color:#6d6d70;font-weight:normal;white-space:nowrap;">Drafting</div>
<div style="position:absolute;left:2271.51px;top:10.23px;font-size:23.61px;line-height:23.61px;color:#6d6d70;font-weight:normal;white-space:nowrap;">New in V8</div>
<div style="position:absolute;left:29.66px;top:199.94px;font-size:26.89px;line-height:26.89px;color:#bdbdbd;font-weight:normal;white-space:nowrap;">Command</div>
<div style="position:absolute;left:6.66px;top:838.74px;font-size:26.77px;line-height:26.77px;color:#8a8a8a;font-weight:normal;white-space:nowrap;">Osnap</div>
<div style="position:absolute;left:65.16px;top:933.25px;font-size:23.00px;line-height:23.00px;color:#222;font-weight:normal;white-space:nowrap;">End</div>
<div style="position:absolute;left:65.16px;top:963.25px;font-size:23.00px;line-height:23.00px;color:#222;font-weight:normal;white-space:nowrap;">Near</div>
<div style="position:absolute;left:65.16px;top:993.25px;font-size:23.00px;line-height:23.00px;color:#222;font-weight:normal;white-space:nowrap;">Point</div>
<div style="position:absolute;left:65.16px;top:1023.25px;font-size:23.00px;line-height:23.00px;color:#222;font-weight:normal;white-space:nowrap;">Mid</div>
<div style="position:absolute;left:65.85px;top:1053.25px;font-size:23.00px;line-height:23.00px;color:#222;font-weight:normal;white-space:nowrap;">Cen</div>
<div style="position:absolute;left:64.93px;top:1083.25px;font-size:23.00px;line-height:23.00px;color:#222;font-weight:normal;white-space:nowrap;">Int</div>
<div style="position:absolute;left:65.16px;top:1113.25px;font-size:23.00px;line-height:23.00px;color:#222;font-weight:normal;white-space:nowrap;">Perp</div>
<div style="position:absolute;left:66.54px;top:1143.25px;font-size:23.00px;line-height:23.00px;color:#222;font-weight:normal;white-space:nowrap;">Tan</div>
<div style="position:absolute;left:65.85px;top:1173.25px;font-size:23.00px;line-height:23.00px;color:#222;font-weight:normal;white-space:nowrap;">Quad</div>
<div style="position:absolute;left:65.16px;top:1203.25px;font-size:23.00px;line-height:23.00px;color:#222;font-weight:normal;white-space:nowrap;">Knot</div>
<div style="position:absolute;left:66.77px;top:1233.25px;font-size:23.00px;line-height:23.00px;color:#222;font-weight:normal;white-space:nowrap;">Vertex</div>
<div style="position:absolute;left:65.16px;top:1263.25px;font-size:23.00px;line-height:23.00px;color:#222;font-weight:normal;white-space:nowrap;">Project</div>
<div style="position:absolute;left:65.16px;top:1327.25px;font-size:23.00px;line-height:23.00px;color:#222;font-weight:normal;white-space:nowrap;">Disable</div>
<div style="position:absolute;left:444.28px;top:1467.75px;font-size:27.71px;line-height:27.71px;color:#1b6ff5;font-weight:normal;white-space:nowrap;">Perspective</div>
<div style="position:absolute;left:669.06px;top:1468.43px;font-size:26.90px;line-height:26.90px;color:#6a6a6a;font-weight:normal;white-space:nowrap;">Top</div>
<div style="position:absolute;left:790.82px;top:1468.10px;font-size:27.29px;line-height:27.29px;color:#6a6a6a;font-weight:normal;white-space:nowrap;">Front</div>
<div style="position:absolute;left:935.25px;top:1468.41px;font-size:26.93px;line-height:26.93px;color:#6a6a6a;font-weight:normal;white-space:nowrap;">Right</div>
<div style="position:absolute;left:1078.28px;top:1467.74px;font-size:27.72px;line-height:27.72px;color:#6a6a6a;font-weight:normal;white-space:nowrap;">Layouts...</div>
<div style="position:absolute;left:2221.81px;top:151.08px;font-size:27.32px;line-height:27.32px;color:#8a8a8a;font-weight:normal;white-space:nowrap;">Layouts</div>
<div style="position:absolute;left:2293.66px;top:265.95px;font-size:26.89px;line-height:26.89px;color:#bcbcbc;font-weight:normal;white-space:nowrap;">Search</div>
<div style="position:absolute;left:2254.85px;top:328.54px;font-size:24.42px;line-height:24.42px;color:#222;font-weight:normal;white-space:nowrap;">No.</div>
<div style="position:absolute;left:2314.73px;top:329.42px;font-size:23.39px;line-height:23.39px;color:#222;font-weight:normal;white-space:nowrap;">Layout</div>
<div style="position:absolute;left:2475.66px;top:329.96px;font-size:22.76px;line-height:22.76px;color:#222;font-weight:normal;white-space:nowrap;">Size</div>
<div style="position:absolute;left:55.30px;top:1518.89px;font-size:24.01px;line-height:24.01px;color:#222;font-weight:normal;white-space:nowrap;">Successfully read file "/Users/vivianemacedo/Desktop/REPRESENTAÇÃO_DIGITAL/Bexercios/treino_teste.3dm"</div>
<div style="position:absolute;left:120.36px;top:1759.36px;font-size:22.87px;line-height:22.87px;color:#585858;font-weight:normal;white-space:nowrap;">CPlane</div>
<div style="position:absolute;left:261.75px;top:1757.59px;font-size:24.95px;line-height:24.95px;color:#585858;font-weight:normal;white-space:nowrap;">x -3.669</div>
<div style="position:absolute;left:401.70px;top:1758.82px;font-size:23.50px;line-height:23.50px;color:#585858;font-weight:normal;white-space:nowrap;">y -15.755</div>
<div style="position:absolute;left:578.02px;top:1758.06px;font-size:24.40px;line-height:24.40px;color:#585858;font-weight:normal;white-space:nowrap;">z 0</div>
<div style="position:absolute;left:728.06px;top:1758.20px;font-size:24.23px;line-height:24.23px;color:#585858;font-weight:normal;white-space:nowrap;">Meters</div>
<div style="position:absolute;left:917.39px;top:1759.27px;font-size:22.97px;line-height:22.97px;color:#585858;font-weight:normal;white-space:nowrap;">linha Grossa</div>
<div style="position:absolute;left:1110.85px;top:1759.24px;font-size:23.01px;line-height:23.01px;color:#585858;font-weight:normal;white-space:nowrap;">Grid Snap</div>
<div style="position:absolute;left:1254.37px;top:1757.95px;font-size:24.53px;line-height:24.53px;color:#585858;font-weight:normal;white-space:nowrap;">Ortho</div>
<div style="position:absolute;left:1574.84px;top:1759.12px;font-size:23.16px;line-height:23.16px;color:#585858;font-weight:normal;white-space:nowrap;">SmartTrack</div>
<div style="position:absolute;left:2006.00px;top:1758.98px;font-size:23.32px;line-height:23.32px;color:#585858;font-weight:normal;white-space:nowrap;">Auto CPlane (Object)</div>
<div style="position:absolute;left:2274.81px;top:1758.74px;font-size:23.60px;line-height:23.60px;color:#585858;font-weight:normal;white-space:nowrap;">Record History</div>
<div style="position:absolute;left:2474.02px;top:1757.75px;font-size:24.77px;line-height:24.77px;color:#585858;font-weight:normal;white-space:nowrap;">Filter</div>
<div style="position:absolute;left:2573.61px;top:1758.77px;font-size:23.57px;line-height:23.57px;color:#585858;font-weight:normal;white-space:nowrap;">Memory use: 1039</div>
<div style="position:absolute;left:1353.16px;top:1758.93px;font-size:23.37px;line-height:23.37px;color:#222;font-weight:bold;white-space:nowrap;">Planar</div>
<div style="position:absolute;left:1461.30px;top:1759.09px;font-size:23.18px;line-height:23.18px;color:#222;font-weight:bold;white-space:nowrap;">Osnap</div>
<div style="position:absolute;left:1736.09px;top:1758.92px;font-size:23.39px;line-height:23.39px;color:#222;font-weight:bold;white-space:nowrap;">Gumball (CPlane)</div>
<div style="position:absolute;left:274.56px;top:156.07px;font-size:24.39px;line-height:24.39px;color:#fff;font-weight:bold;white-space:nowrap;">Top</div>
<div style="position:absolute;left:1260.91px;top:155.02px;font-size:25.63px;line-height:25.63px;color:#fff;font-weight:bold;white-space:nowrap;">Perspective</div>
<div style="position:absolute;left:273.98px;top:823.91px;font-size:24.57px;line-height:24.57px;color:#fff;font-weight:bold;white-space:nowrap;">Front</div>
<div style="position:absolute;left:1260.84px;top:821.40px;font-size:25.18px;line-height:25.18px;color:#fff;font-weight:bold;white-space:nowrap;">Right</div>
<svg style="position:absolute;left:0;top:0" width="2880" height="1800" viewBox="0 0 2880 1800">
<circle cx="19" cy="51" r="2.6" fill="none" stroke="#9a9a9a" stroke-width="1.6"/>
<circle cx="19" cy="63" r="2.6" fill="none" stroke="#9a9a9a" stroke-width="1.6"/>
<circle cx="19" cy="75" r="2.6" fill="none" stroke="#9a9a9a" stroke-width="1.6"/>
<circle cx="19" cy="87" r="2.6" fill="none" stroke="#9a9a9a" stroke-width="1.6"/>
<circle cx="113" cy="159" r="2.6" fill="none" stroke="#9a9a9a" stroke-width="1.6"/>
<circle cx="125" cy="159" r="2.6" fill="none" stroke="#9a9a9a" stroke-width="1.6"/>
<circle cx="137" cy="159" r="2.6" fill="none" stroke="#9a9a9a" stroke-width="1.6"/>
<circle cx="149" cy="159" r="2.6" fill="none" stroke="#9a9a9a" stroke-width="1.6"/>
<path d="M39.5 944.5 L44.5 950 L53 938" fill="none" stroke="#fff" stroke-width="3" stroke-linecap="round" stroke-linejoin="round"/>
<path d="M39.5 1034.5 L44.5 1040 L53 1028" fill="none" stroke="#fff" stroke-width="3" stroke-linecap="round" stroke-linejoin="round"/>
<path d="M39.5 1064.5 L44.5 1070 L53 1058" fill="none" stroke="#fff" stroke-width="3" stroke-linecap="round" stroke-linejoin="round"/>
<path d="M39.5 1094.5 L44.5 1100 L53 1088" fill="none" stroke="#fff" stroke-width="3" stroke-linecap="round" stroke-linejoin="round"/>
<path d="M39.5 1124.5 L44.5 1130 L53 1118" fill="none" stroke="#fff" stroke-width="3" stroke-linecap="round" stroke-linejoin="round"/>
<defs>
<linearGradient id="gPage" x1="0" y1="0" x2="1" y2="1"><stop offset="0" stop-color="#ffffff"/><stop offset="1" stop-color="#c9c9c9"/></linearGradient>
<linearGradient id="gFold" x1="0" y1="0" x2="0" y2="1"><stop offset="0" stop-color="#ffe86a"/><stop offset="1" stop-color="#f2b400"/></linearGradient>
<linearGradient id="gFoldB" x1="0" y1="0" x2="0" y2="1"><stop offset="0" stop-color="#ffe680"/><stop offset="1" stop-color="#e8c040"/></linearGradient>
<linearGradient id="gGray" x1="0" y1="0" x2="0" y2="1"><stop offset="0" stop-color="#f0f0f0"/><stop offset="1" stop-color="#9a9a9a"/></linearGradient>
<linearGradient id="gBlue" x1="0" y1="0" x2="1" y2="1"><stop offset="0" stop-color="#c4ceff"/><stop offset="1" stop-color="#4a64e6"/></linearGradient>
<linearGradient id="gBlueD" x1="0" y1="0" x2="1" y2="1"><stop offset="0" stop-color="#6f86f2"/><stop offset="1" stop-color="#26389c"/></linearGradient>
<radialGradient id="gSph" cx="0.35" cy="0.3" r="0.8"><stop offset="0" stop-color="#ffffff"/><stop offset="0.6" stop-color="#c8c8c8"/><stop offset="1" stop-color="#7a7a7a"/></radialGradient>
<radialGradient id="gBSph" cx="0.35" cy="0.3" r="0.8"><stop offset="0" stop-color="#8fb4ff"/><stop offset="0.5" stop-color="#1e4ad8"/><stop offset="1" stop-color="#06136a"/></radialGradient>
<radialGradient id="gGlobe" cx="0.4" cy="0.35" r="0.75"><stop offset="0" stop-color="#c8f09a"/><stop offset="0.6" stop-color="#5cb030"/><stop offset="1" stop-color="#1c4a10"/></radialGradient>
<radialGradient id="gHelp" cx="0.4" cy="0.3" r="0.8"><stop offset="0" stop-color="#7a9cf0"/><stop offset="0.7" stop-color="#3656c8"/><stop offset="1" stop-color="#1d2e88"/></radialGradient>
<radialGradient id="gBulb" cx="0.4" cy="0.3" r="0.8"><stop offset="0" stop-color="#ffffff"/><stop offset="0.5" stop-color="#b8b8b8"/><stop offset="1" stop-color="#6a6a6a"/></radialGradient>
<radialGradient id="gBall" cx="0.35" cy="0.3" r="0.75"><stop offset="0" stop-color="#dfe6ff"/><stop offset="0.55" stop-color="#6b86ee"/><stop offset="1" stop-color="#2a3ca8"/></radialGradient>
<linearGradient id="gOrange" x1="0" y1="1" x2="1" y2="0"><stop offset="0" stop-color="#ffb800"/><stop offset="1" stop-color="#ff4a00"/></linearGradient>
<linearGradient id="gPyr" x1="0" y1="0" x2="1" y2="0"><stop offset="0" stop-color="#ffe680"/><stop offset="1" stop-color="#c8a040"/></linearGradient>
<linearGradient id="gCone" x1="0" y1="0" x2="1" y2="1"><stop offset="0" stop-color="#ffe060"/><stop offset="1" stop-color="#ff6a00"/></linearGradient><linearGradient id="gGear" x1="0" y1="0" x2="0" y2="1"><stop offset="0" stop-color="#ffe690"/><stop offset="1" stop-color="#f5c860"/></linearGradient>
</defs>
<defs><linearGradient id="gRainbow"><stop offset="0" stop-color="#f00"/><stop offset="1" stop-color="#00f"/></linearGradient></defs>
<g transform="translate(44,50) scale(1.0)"><path d="M1.5 1.5 H21 L28.5 9 V38.5 H1.5 Z" fill="url(#gPage)" stroke="#000" stroke-linejoin="round" stroke-width="3"/><path d="M21 1.5 V9 H28.5" fill="#fff" stroke="#000" stroke-linejoin="round" stroke-width="2.2"/></g>
<g transform="translate(94,58) scale(1.0)"><path d="M1.5 28.5 V5 L5 1.5 H15 L18.5 4.5 H31 L33 6.5 V11" fill="url(#gFoldB)" stroke="#000" stroke-linejoin="round" stroke-width="2.6"/><path d="M1.5 28.5 L9 10.5 H40.5 L33 28.5 Z" fill="url(#gFold)" stroke="#000" stroke-linejoin="round" stroke-width="2.6"/></g>
<g transform="translate(152,50) scale(1.0)"><path d="M3 1.5 H37 L38.5 3 V37 L37 38.5 H4 L1.5 36 V3 Z" fill="#c6b46c" stroke="#000" stroke-linejoin="round" stroke-width="2.6"/><rect x="7" y="2.5" width="26" height="16" fill="url(#gGray)" stroke="#000" stroke-linejoin="round" stroke-width="2.2"/><rect x="9" y="25" width="19" height="13" fill="#a8a8a8" stroke="#000" stroke-linejoin="round" stroke-width="2.2"/><rect x="11.5" y="27.5" width="5" height="9" fill="#7a6c3a"/></g>
<g transform="translate(208,52) scale(1.0)"><path d="M8 20 C8 10 10 3 14 1.5 H36 C32 6 30 12 30 20 Z" fill="#fff" stroke="#000" stroke-linejoin="round" stroke-width="2.4"/><path d="M2 22 L8 17 H38 V31 L33 36 H4 L2 34 Z" fill="#6a6a6a" stroke="#000" stroke-linejoin="round" stroke-width="2.4"/><rect x="2" y="22" width="31" height="7" fill="#e8e8e8" stroke="#000" stroke-linejoin="round" stroke-width="2"/><rect x="4" y="30" width="29" height="6" fill="#a5a5a5" stroke="#000" stroke-linejoin="round" stroke-width="2"/><path d="M17 9 L21 7 L25 9 V14 L21 16 L17 14 Z" fill="#c8c8c8"/></g>
<g transform="translate(266,48) scale(1.0)"><path d="M1.5 5 H28 V34 L20 42 H1.5 Z" fill="url(#gPage)" stroke="#000" stroke-linejoin="round" stroke-width="2.6"/><path d="M20 42 V34 H28" fill="#fff" stroke="#000" stroke-linejoin="round" stroke-width="2"/><path d="M12 13 L19 4 L27 1.5 H36 V9 H30 L24 14 Z" fill="#fff" stroke="#000" stroke-linejoin="round" stroke-width="2"/><rect x="35" y="0" width="4" height="10" fill="#000"/></g>
<g transform="translate(325.5,52) scale(1.0)"><path d="M4.4 1 C4 4 5 7 7 10 L16 24 L18.5 21 L8 5 Z" fill="#000"/><path d="M24.6 1 C25 4 24 7 22 10 L13 24 L10.5 21 L21 5 Z" fill="#000"/><path d="M14.5 21 L8 31" stroke="#0d1b50" stroke-width="2.4"/><path d="M14.5 21 L21 31" stroke="#0d1b50" stroke-width="2.4"/><ellipse cx="5.6" cy="30" rx="3.4" ry="6.4" fill="none" stroke="#0d1b50" stroke-width="1.9" transform="rotate(38 5.6 30)"/><ellipse cx="23.4" cy="30" rx="3.4" ry="6.4" fill="none" stroke="#0d1b50" stroke-width="1.9" transform="rotate(-38 23.4 30)"/></g>
<g transform="translate(380,50) scale(1.0)"><path d="M1.5 1.5 H16 L21 6.5 V29 H1.5 Z" fill="#fff" stroke="#000" stroke-linejoin="round" stroke-width="2.4"/><path d="M9 10 H24 L28.5 14.5 V38.5 H9 Z" fill="url(#gPage)" stroke="#000" stroke-linejoin="round" stroke-width="2.4"/></g>
<g transform="translate(438,53) scale(1.0)"><rect x="1.5" y="4" width="25" height="31.5" rx="4" fill="#fcd660" stroke="#000" stroke-linejoin="round" stroke-width="2.6"/><path d="M8 2 H20 L18 7 H10 Z" fill="#fff" stroke="#000" stroke-linejoin="round" stroke-width="2"/></g>
<g transform="translate(488,57) scale(1.0)"><path d="M39 9 C33 1 22 -1 12 8" fill="none" stroke="#000" stroke-width="4.5"/><path d="M0 18 L5 4 L17 12 Z" fill="#000"/></g>
<g transform="translate(545,48) scale(1.0)"><path d="M8 42 L2 24 C1 20 4 18 7 21 L11 27 V6 C11 3 15 3 15 6 V19 V3 C15 0 20 0 20 3 V19 V5 C20 2 25 2 25 5 V20 V9 C25 6 30 6 30 9 V32 L28 42" fill="#fafafa" stroke="#000" stroke-linejoin="round" stroke-width="2.4"/></g>
<g transform="translate(598,48) scale(1.0)"><ellipse cx="22" cy="21" rx="21" ry="7" fill="none" stroke="#666" stroke-width="1.6"/><ellipse cx="22" cy="21" rx="6" ry="21" fill="none" stroke="#000" stroke-width="2"/><path d="M26 10 L22 32 M27 4 L23 12 L31 12 Z M14 26 L26 24 M11 26 L19 21 L19 30 Z" stroke="#000" stroke-width="2" fill="#000"/></g>
<g transform="translate(658,53) scale(1.0)"><line x1="16.3" y1="19.7" x2="3.6499999999999986" y2="32.35" stroke="#000" stroke-width="3.8"/><circle cx="24" cy="12" r="11" fill="url(#gPage)" stroke="#000" stroke-width="2.4"/><path d="M20 9 H28 M24 5 V13 M19 17 H29" stroke="#000" stroke-width="2"/></g>
<g transform="translate(712.5,50) scale(1.0)"><rect x="13" y="1" width="28" height="26" fill="none" stroke="#000" stroke-width="2" stroke-dasharray="4 3"/><line x1="10.3" y1="27.7" x2="-2.3500000000000014" y2="40.35" stroke="#000" stroke-width="3.8"/><circle cx="18" cy="20" r="11" fill="url(#gPage)" stroke="#000" stroke-width="2.4"/></g>
<g transform="translate(768,50) scale(1.0)"><path d="M0 0 H9 L0 9 Z M40 0 H31 L40 9 Z M0 40 H9 L0 31 Z M40 40 H31 L40 31 Z" fill="#000"/><line x1="16" y1="23" x2="5" y2="34" stroke="#000" stroke-width="3.8"/><circle cx="23" cy="16" r="11" fill="url(#gPage)" stroke="#000" stroke-width="2.4"/></g>
<g transform="translate(825,50) scale(1.0)"><line x1="13.200000000000001" y1="25.799999999999997" x2="-2.900000000000002" y2="41.900000000000006" stroke="#000" stroke-width="3.8"/><circle cx="23" cy="16" r="14" fill="url(#gPage)" stroke="#000" stroke-width="2.4"/><circle cx="26" cy="11" r="6" fill="#f4e010" stroke="#555" stroke-width="1"/><circle cx="19" cy="19" r="5.5" fill="#f4e010" stroke="#333" stroke-width="1.2"/></g>
<g transform="translate(880,51) scale(1.0)"><path d="M40 9 C33 1 24 1 16 8" fill="none" stroke="#111" stroke-width="5"/><path d="M11 16 L15 2 L24 11 Z" fill="#000"/><line x1="20.7" y1="31.3" x2="10.349999999999998" y2="41.650000000000006" stroke="#000" stroke-width="3.8"/><circle cx="27" cy="25" r="9" fill="url(#gPage)" stroke="#000" stroke-width="2.4"/></g>
<g transform="translate(934,50) scale(1.0)"><rect x="1.5" y="1.5" width="39" height="35" fill="#c8c8c8" stroke="#000" stroke-width="3"/><path d="M21 1.5 V36.5 M1.5 19 H40.5" stroke="#000" stroke-width="3"/><path d="M4 4 H10 M23 4 H29 M4 21.5 H10 M23 21.5 H29" stroke="#777" stroke-width="1.5"/><path d="M24 4 H30" stroke="#2030a0" stroke-width="1.5"/></g>
<g transform="translate(990,60) scale(1.0)"><line x1="0" y1="21" x2="44" y2="21" stroke="#aaa" stroke-width="1.5"/><path d="M3 11 L10 7 L17 6 L19 0 H34 L36 6 L40 7 V14 H4 Z" fill="#e01818"/><rect x="23" y="2" width="10" height="5" fill="#fff"/><circle cx="11" cy="15" r="3.5" fill="#222" stroke="#ddd" stroke-width="1"/><circle cx="32" cy="15" r="3.5" fill="#222" stroke="#ddd" stroke-width="1"/></g>
<g transform="translate(1046,60) scale(1.0)"><path d="M0 19 L17 1 L44 7 L32 31 Z" fill="none" stroke="#555" stroke-width="1.3"/><path d="M5 14 L31 20 M10 9 L37 14 M14 5 L40 11 M6 23 L22 3 M13 25 L27 4 M20 27 L33 6 M26 29 L38 7" stroke="#555" stroke-width="1.1"/><path d="M18 10 L26 12" stroke="#000"/><path d="M27 13 L36 -1" stroke="#2a9a2a" stroke-width="2"/><path d="M24 20 L40 24" stroke="#d01010" stroke-width="2.2"/><rect x="19" y="16" width="7" height="7" fill="#fff" stroke="#000" stroke-width="2"/></g>
<g transform="translate(1104,52) scale(1.0)"><circle cx="17" cy="18" r="16.5" fill="none" stroke="#666" stroke-width="1.8"/><rect x="14" y="15" width="6" height="6" fill="#fff" stroke="#000" stroke-width="2"/><line x1="20" y1="18" x2="40" y2="18" stroke="#000" stroke-width="2"/></g>
<g transform="translate(1158,48) scale(1.0)"><circle cx="14" cy="13" r="6" fill="#f6d800" stroke="#a0600a" stroke-width="1.8"/><rect x="23" y="12" width="13" height="12" fill="#f6d800" stroke="#a0600a" stroke-width="1.8"/><path d="M18 35 L23 26 L28 35 Z" fill="none" stroke="#a0600a" stroke-width="1.8"/><path d="M36 0 H41 V7 M0 34 V40 H7" fill="none" stroke="#000" stroke-width="2"/></g>
<g transform="translate(1222,50) scale(1.0)"><path d="M14 40 C9 40 9 36 9 30 C9 24 1 20 1 12 C1 5 7 0 14 0 C21 0 27 5 27 12 C27 20 19 24 19 30 C19 36 19 40 14 40 Z" fill="url(#gBulb)" stroke="#000" stroke-width="2.2"/></g>
<g transform="translate(1280,52) scale(1.0)"><path d="M6 15 V8 C6 2 18 2 18 8 V15" fill="none" stroke="#000" stroke-width="3.5"/><rect x="1.5" y="14" width="21" height="19" rx="2" fill="url(#gGray)" stroke="#000" stroke-width="2.2"/><path d="M5 20 H19 M5 24 H19 M5 28 H19" stroke="#777" stroke-width="1.5"/></g>
<g transform="translate(1330,52) scale(1.0)"><path d="M1 1 L36 8 L34 28 L17 37 L2 22 Z" fill="#222"/><path d="M3 4 L34 10 L33 16 L18 20 Z" fill="#ff8a4a"/><path d="M4 13 L18 21 L33 16 V22 L18 27 L5 18 Z" fill="#e82020"/><path d="M5 18 L18 27 L33 22 V25 L18 30 L6 21 Z" fill="#ddd"/><path d="M6 21 L18 30 L33 25 V27 L17 35 L7 25 Z" fill="#2850c8"/></g>
<g transform="translate(1384,50) scale(1.0)"><circle cx="20" cy="20" r="19.1" fill="#000"/><polygon points="20.00,2.50 22.62,2.70 21.47,10.31 20.00,10.20" fill="#ff0000"/><polygon points="22.28,2.65 24.86,3.19 22.72,10.59 21.28,10.28" fill="#ff1f00"/><polygon points="24.53,3.10 27.01,3.97 23.93,11.02 22.54,10.53" fill="#ff3f00"/><polygon points="26.70,3.83 29.05,5.02 25.07,11.61 23.75,10.95" fill="#ff5f00"/><polygon points="28.75,4.84 30.92,6.33 26.12,12.34 24.90,11.51" fill="#ff7f00"/><polygon points="30.65,6.12 32.61,7.87 27.06,13.21 25.97,12.23" fill="#ff9f00"/><polygon points="32.37,7.63 34.09,9.62 27.89,14.19 26.93,13.07" fill="#ffbf00"/><polygon points="33.88,9.35 35.32,11.55 28.58,15.27 27.77,14.03" fill="#ffdf00"/><polygon points="35.16,11.25 36.30,13.62 29.13,16.43 28.49,15.10" fill="#ffff00"/><polygon points="36.17,13.30 36.99,15.80 29.51,17.65 29.05,16.25" fill="#dfff00"/><polygon points="36.90,15.47 37.39,18.06 29.74,18.91 29.47,17.46" fill="#bfff00"/><polygon points="37.35,17.72 37.50,20.34 29.80,20.19 29.72,18.72" fill="#9fff00"/><polygon points="37.50,20.00 37.30,22.62 29.69,21.47 29.80,20.00" fill="#7fff00"/><polygon points="37.35,22.28 36.81,24.86 29.41,22.72 29.72,21.28" fill="#5fff00"/><polygon points="36.90,24.53 36.03,27.01 28.98,23.93 29.47,22.54" fill="#3fff00"/><polygon points="36.17,26.70 34.98,29.05 28.39,25.07 29.05,23.75" fill="#1fff00"/><polygon points="35.16,28.75 33.67,30.92 27.66,26.12 28.49,24.90" fill="#00ff00"/><polygon points="33.88,30.65 32.13,32.61 26.79,27.06 27.77,25.97" fill="#00ff1f"/><polygon points="32.37,32.37 30.38,34.09 25.81,27.89 26.93,26.93" fill="#00ff3f"/><polygon points="30.65,33.88 28.45,35.32 24.73,28.58 25.97,27.77" fill="#00ff5f"/><polygon points="28.75,35.16 26.38,36.30 23.57,29.13 24.90,28.49" fill="#00ff7f"/><polygon points="26.70,36.17 24.20,36.99 22.35,29.51 23.75,29.05" fill="#00ff9f"/><polygon points="24.53,36.90 21.94,37.39 21.09,29.74 22.54,29.47" fill="#00ffbf"/><polygon points="22.28,37.35 19.66,37.50 19.81,29.80 21.28,29.72" fill="#00ffdf"/><polygon points="20.00,37.50 17.38,37.30 18.53,29.69 20.00,29.80" fill="#00ffff"/><polygon points="17.72,37.35 15.14,36.81 17.28,29.41 18.72,29.72" fill="#00dfff"/><polygon points="15.47,36.90 12.99,36.03 16.07,28.98 17.46,29.47" fill="#00bfff"/><polygon points="13.30,36.17 10.95,34.98 14.93,28.39 16.25,29.05" fill="#009fff"/><polygon points="11.25,35.16 9.08,33.67 13.88,27.66 15.10,28.49" fill="#007fff"/><polygon points="9.35,33.88 7.39,32.13 12.94,26.79 14.03,27.77" fill="#005fff"/><polygon points="7.63,32.37 5.91,30.38 12.11,25.81 13.07,26.93" fill="#003fff"/><polygon points="6.12,30.65 4.68,28.45 11.42,24.73 12.23,25.97" fill="#001fff"/><polygon points="4.84,28.75 3.70,26.38 10.87,23.57 11.51,24.90" fill="#0000ff"/><polygon points="3.83,26.70 3.01,24.20 10.49,22.35 10.95,23.75" fill="#1f00ff"/><polygon points="3.10,24.53 2.61,21.94 10.26,21.09 10.53,22.54" fill="#3f00ff"/><polygon points="2.65,22.28 2.50,19.66 10.20,19.81 10.28,21.28" fill="#5f00ff"/><polygon points="2.50,20.00 2.70,17.38 10.31,18.53 10.20,20.00" fill="#7f00ff"/><polygon points="2.65,17.72 3.19,15.14 10.59,17.28 10.28,18.72" fill="#9f00ff"/><polygon points="3.10,15.47 3.97,12.99 11.02,16.07 10.53,17.46" fill="#bf00ff"/><polygon points="3.83,13.30 5.02,10.95 11.61,14.93 10.95,16.25" fill="#df00ff"/><polygon points="4.84,11.25 6.33,9.08 12.34,13.88 11.51,15.10" fill="#ff00ff"/><polygon points="6.12,9.35 7.87,7.39 13.21,12.94 12.23,14.03" fill="#ff00df"/><polygon points="7.63,7.63 9.62,5.91 14.19,12.11 13.07,13.07" fill="#ff00bf"/><polygon points="9.35,6.12 11.55,4.68 15.27,11.42 14.03,12.23" fill="#ff009f"/><polygon points="11.25,4.84 13.62,3.70 16.43,10.87 15.10,11.51" fill="#ff007f"/><polygon points="13.30,3.83 15.80,3.01 17.65,10.49 16.25,10.95" fill="#ff005f"/><polygon points="15.47,3.10 18.06,2.61 18.91,10.26 17.46,10.53" fill="#ff003f"/><polygon points="17.72,2.65 20.34,2.50 20.19,10.20 18.72,10.28" fill="#ff001f"/><circle cx="20" cy="20" r="9.8" fill="#fff"/></g>
<g transform="translate(1442,52) scale(1.0)"><circle cx="18" cy="18" r="17" fill="url(#gSph)" stroke="#000" stroke-width="2.4"/><path d="M1 20.55 C9.5 23.1 26.5 23.1 35 18.85" fill="none" stroke="#000" stroke-width="2"/><path d="M18.85 1 C12.9 11.2 12.9 26.5 17.15 35" fill="none" stroke="#000" stroke-width="2"/></g>
<g transform="translate(1492,46) scale(1.0)"><line x1="3" y1="0" x2="3" y2="48" stroke="#8a8a8a" stroke-width="1.4"/><line x1="0" y1="3" x2="48" y2="3" stroke="#8a8a8a" stroke-width="1.4"/><line x1="11" y1="0" x2="11" y2="48" stroke="#8a8a8a" stroke-width="1.4"/><line x1="0" y1="11" x2="48" y2="11" stroke="#8a8a8a" stroke-width="1.4"/><line x1="19" y1="0" x2="19" y2="48" stroke="#8a8a8a" stroke-width="1.4"/><line x1="0" y1="19" x2="48" y2="19" stroke="#8a8a8a" stroke-width="1.4"/><line x1="27" y1="0" x2="27" y2="48" stroke="#8a8a8a" stroke-width="1.4"/><line x1="0" y1="27" x2="48" y2="27" stroke="#8a8a8a" stroke-width="1.4"/><line x1="35" y1="0" x2="35" y2="48" stroke="#8a8a8a" stroke-width="1.4"/><line x1="0" y1="35" x2="48" y2="35" stroke="#8a8a8a" stroke-width="1.4"/><line x1="43" y1="0" x2="43" y2="48" stroke="#8a8a8a" stroke-width="1.4"/><line x1="0" y1="43" x2="48" y2="43" stroke="#8a8a8a" stroke-width="1.4"/><circle cx="24" cy="24" r="17" fill="url(#gSph)" stroke="#000" stroke-width="2.4"/><path d="M7 26.55 C15.5 29.1 32.5 29.1 41 24.85" fill="none" stroke="#000" stroke-width="2"/><path d="M24.85 7 C18.9 17.2 18.9 32.5 23.15 41" fill="none" stroke="#000" stroke-width="2"/></g>
<g transform="translate(1554,50) scale(1.0)"><ellipse cx="20" cy="34" rx="20" ry="6" fill="#000" opacity="0.35"/><circle cx="18" cy="18" r="17" fill="url(#gBSph)" stroke="#000" stroke-width="2"/><ellipse cx="11" cy="10" rx="4" ry="2.5" fill="#fff" opacity="0.8" transform="rotate(-35 11 10)"/></g>
<g transform="translate(1625,48) scale(1.0)"><ellipse cx="0" cy="22" rx="24" ry="14" fill="#f6f6f6" opacity="0.8"/><path d="M0.5 7 L24 1 L19 26 Z" fill="url(#gCone)" stroke="#000" stroke-width="1.8" stroke-linejoin="round"/><path d="M0.5 7 C1 14 12 24 19 26 C16 20 8 10 0.5 7 Z" fill="#fff4d8" stroke="#000" stroke-width="1"/></g>
<g transform="translate(1662,53) scale(1.0)"><polygon points="35.2,14.1 42.6,14.5 42.6,21.5 35.2,21.9 34.6,23.2 39.5,27.9 33.6,32.9 28.2,28.7 26.5,29.3 26.2,35.5 17.8,35.5 17.5,29.3 15.8,28.7 10.4,32.9 4.5,27.9 9.4,23.2 8.8,21.9 1.4,21.5 1.4,14.5 8.8,14.1 9.4,12.8 4.5,8.1 10.4,3.1 15.8,7.3 17.5,6.7 17.8,0.5 26.2,0.5 26.5,6.7 28.2,7.3 33.6,3.1 39.5,8.1 34.6,12.8" fill="url(#gGear)" stroke="#000" stroke-width="2.2" stroke-linejoin="round"/><ellipse cx="22" cy="21" rx="8" ry="6" fill="#d08a30"/><rect x="17.5" y="6" width="9" height="18" rx="4.5" fill="url(#gGray)" stroke="#333" stroke-width="1"/></g>
<g transform="translate(1718,46) scale(1.0)"><path d="M0 4 H18 M0 24 H18 M6 8 V20 M20 25 V44 M40 23 V44 M22 36 H38" stroke="#000" stroke-width="2.4" fill="none"/><path d="M3 10 L6 5 L9 10 Z M3 18 L6 23 L9 18 Z M26 33 L22 36 L26 39 Z M34 33 L38 36 L34 39 Z" fill="#000"/><rect x="18" y="0" width="6" height="6" fill="#fff" stroke="#000" stroke-width="2"/><rect x="17" y="20" width="6" height="6" fill="#fff" stroke="#000" stroke-width="2"/><rect x="37" y="19" width="6" height="6" fill="#fff" stroke="#000" stroke-width="2"/></g>
<g transform="translate(1774,48) scale(1.0)"><circle cx="22" cy="22" r="21" fill="url(#gGlobe)" stroke="#000" stroke-width="2.4"/><path d="M14 22 L22 30 L30 34 L36 36 L38 33 M10 24 L20 40" stroke="#000" stroke-width="3" fill="none"/><path d="M12 20 C16 18 20 24 24 30 L30 40 L18 42 L8 34 Z" fill="#000"/><path d="M18 2 C20 14 18 26 22 40 M4 14 C14 10 28 10 40 16" fill="none" stroke="#333" stroke-width="1"/></g>
<g transform="translate(1832,50) scale(1.0)"><circle cx="20" cy="20" r="19.8" fill="url(#gHelp)"/><text x="20" y="34" text-anchor="middle" font-family="Liberation Serif" font-weight="bold" font-size="42" fill="#fff">?</text></g>
<path d="M200 87 L200 98 L189 98 Z" fill="#5d5d5d"/>
<path d="M535 87 L535 98 L524 98 Z" fill="#5d5d5d"/>
<path d="M928 87 L928 98 L917 98 Z" fill="#5d5d5d"/>
<path d="M984 87 L984 98 L973 98 Z" fill="#5d5d5d"/>
<path d="M1040 87 L1040 98 L1029 98 Z" fill="#5d5d5d"/>
<path d="M1096 87 L1096 98 L1085 98 Z" fill="#5d5d5d"/>
<path d="M1152 87 L1152 98 L1141 98 Z" fill="#5d5d5d"/>
<path d="M1207 87 L1207 98 L1196 98 Z" fill="#5d5d5d"/>
<path d="M1263 87 L1263 98 L1252 98 Z" fill="#5d5d5d"/>
<path d="M1319 87 L1319 98 L1308 98 Z" fill="#5d5d5d"/>
<path d="M1375 87 L1375 98 L1364 98 Z" fill="#5d5d5d"/>
<path d="M1431 87 L1431 98 L1420 98 Z" fill="#5d5d5d"/>
<path d="M1543 87 L1543 98 L1532 98 Z" fill="#5d5d5d"/>
<path d="M1600 87 L1600 98 L1589 98 Z" fill="#5d5d5d"/>
<path d="M1656 87 L1656 98 L1645 98 Z" fill="#5d5d5d"/>
<path d="M1712 87 L1712 98 L1701 98 Z" fill="#5d5d5d"/>
<path d="M1768 87 L1768 98 L1757 98 Z" fill="#5d5d5d"/>
<path d="M1823 87 L1823 98 L1812 98 Z" fill="#5d5d5d"/>
<path d="M1879 87 L1879 98 L1868 98 Z" fill="#5d5d5d"/>
<circle cx="2853.8" cy="20" r="9.0" fill="#c4c4c5"/><rect x="2851.28" y="8.00" width="5.04" height="12.00" rx="1.01" fill="#c4c4c5" transform="rotate(0 2853.8 20)"/><rect x="2851.28" y="8.00" width="5.04" height="12.00" rx="1.01" fill="#c4c4c5" transform="rotate(45 2853.8 20)"/><rect x="2851.28" y="8.00" width="5.04" height="12.00" rx="1.01" fill="#c4c4c5" transform="rotate(90 2853.8 20)"/><rect x="2851.28" y="8.00" width="5.04" height="12.00" rx="1.01" fill="#c4c4c5" transform="rotate(135 2853.8 20)"/><rect x="2851.28" y="8.00" width="5.04" height="12.00" rx="1.01" fill="#c4c4c5" transform="rotate(180 2853.8 20)"/><rect x="2851.28" y="8.00" width="5.04" height="12.00" rx="1.01" fill="#c4c4c5" transform="rotate(225 2853.8 20)"/><rect x="2851.28" y="8.00" width="5.04" height="12.00" rx="1.01" fill="#c4c4c5" transform="rotate(270 2853.8 20)"/><rect x="2851.28" y="8.00" width="5.04" height="12.00" rx="1.01" fill="#c4c4c5" transform="rotate(315 2853.8 20)"/><circle cx="2853.8" cy="20" r="4.0" fill="#d9d9dd"/>
<circle cx="238" cy="854" r="9.0" fill="#b4b4b4"/><rect x="235.48" y="842.00" width="5.04" height="12.00" rx="1.01" fill="#b4b4b4" transform="rotate(0 238 854)"/><rect x="235.48" y="842.00" width="5.04" height="12.00" rx="1.01" fill="#b4b4b4" transform="rotate(45 238 854)"/><rect x="235.48" y="842.00" width="5.04" height="12.00" rx="1.01" fill="#b4b4b4" transform="rotate(90 238 854)"/><rect x="235.48" y="842.00" width="5.04" height="12.00" rx="1.01" fill="#b4b4b4" transform="rotate(135 238 854)"/><rect x="235.48" y="842.00" width="5.04" height="12.00" rx="1.01" fill="#b4b4b4" transform="rotate(180 238 854)"/><rect x="235.48" y="842.00" width="5.04" height="12.00" rx="1.01" fill="#b4b4b4" transform="rotate(225 238 854)"/><rect x="235.48" y="842.00" width="5.04" height="12.00" rx="1.01" fill="#b4b4b4" transform="rotate(270 238 854)"/><rect x="235.48" y="842.00" width="5.04" height="12.00" rx="1.01" fill="#b4b4b4" transform="rotate(315 238 854)"/><circle cx="238" cy="854" r="4.0" fill="#ececec"/>
<circle cx="2853" cy="166" r="9.0" fill="#b4b4b4"/><rect x="2850.48" y="154.00" width="5.04" height="12.00" rx="1.01" fill="#b4b4b4" transform="rotate(0 2853 166)"/><rect x="2850.48" y="154.00" width="5.04" height="12.00" rx="1.01" fill="#b4b4b4" transform="rotate(45 2853 166)"/><rect x="2850.48" y="154.00" width="5.04" height="12.00" rx="1.01" fill="#b4b4b4" transform="rotate(90 2853 166)"/><rect x="2850.48" y="154.00" width="5.04" height="12.00" rx="1.01" fill="#b4b4b4" transform="rotate(135 2853 166)"/><rect x="2850.48" y="154.00" width="5.04" height="12.00" rx="1.01" fill="#b4b4b4" transform="rotate(180 2853 166)"/><rect x="2850.48" y="154.00" width="5.04" height="12.00" rx="1.01" fill="#b4b4b4" transform="rotate(225 2853 166)"/><rect x="2850.48" y="154.00" width="5.04" height="12.00" rx="1.01" fill="#b4b4b4" transform="rotate(270 2853 166)"/><rect x="2850.48" y="154.00" width="5.04" height="12.00" rx="1.01" fill="#b4b4b4" transform="rotate(315 2853 166)"/><circle cx="2853" cy="166" r="4.0" fill="#ececec"/>
<g transform="translate(21,265)"><path d="M11.6 4.6 L11.6 32.6 L18.6 26 L24.2 37.6 L28.8 35.4 L23.4 24.2 L31.6 23.6 Z" fill="#fff" stroke="#111" stroke-width="2" stroke-linejoin="miter"/></g>
<g transform="translate(77.3,265)"><circle cx="19.6" cy="19.8" r="4" fill="#fff" stroke="#000" stroke-width="2"/></g>
<g transform="translate(133.6,265)"><path d="M6.2 35 L16.3 8.8 L34.1 29" stroke="#000" stroke-width="2.2" fill="none"/><rect x="2.95" y="31.75" width="6.5" height="6.5" fill="#fff" stroke="#000" stroke-width="2"/><rect x="13.05" y="5.550000000000001" width="6.5" height="6.5" fill="#fff" stroke="#000" stroke-width="2"/><rect x="30.85" y="25.75" width="6.5" height="6.5" fill="#fff" stroke="#000" stroke-width="2"/></g>
<g transform="translate(190,265)"><path d="M7 8.6 C26 4 33.8 10 33.8 21 C33.8 31 25 35.5 7 33" stroke="#000" stroke-width="2.2" fill="none"/><rect x="0.6499999999999999" y="5.550000000000001" width="6.5" height="6.5" fill="#fff" stroke="#000" stroke-width="2"/><rect x="28.65" y="-0.3500000000000001" width="6.5" height="6.5" fill="#fff" stroke="#000" stroke-width="2"/><rect x="0.6499999999999999" y="29.950000000000003" width="6.5" height="6.5" fill="#fff" stroke="#000" stroke-width="2"/><rect x="32.45" y="33.55" width="6.5" height="6.5" fill="#fff" stroke="#000" stroke-width="2"/></g>
<g transform="translate(21,321)"><circle cx="20" cy="19.8" r="18.2" stroke="#000" stroke-width="2.2" fill="none"/><line x1="20.9" y1="18.9" x2="33" y2="7" stroke="#777" stroke-width="1.5"/><rect x="17.65" y="15.649999999999999" width="6.5" height="6.5" fill="#fff" stroke="#000" stroke-width="2"/><rect x="29.75" y="3.75" width="6.5" height="6.5" fill="#fff" stroke="#000" stroke-width="2"/></g>
<g transform="translate(77.3,321)"><ellipse cx="20.8" cy="23" rx="19.6" ry="13" stroke="#000" stroke-width="2.2" fill="none"/><path d="M20.6 8.8 V23 H38.7" stroke="#777" stroke-width="1.5" fill="none"/><rect x="17.35" y="5.550000000000001" width="6.5" height="6.5" fill="#fff" stroke="#000" stroke-width="2"/><rect x="17.35" y="19.75" width="6.5" height="6.5" fill="#fff" stroke="#000" stroke-width="2"/><rect x="35.45" y="19.75" width="6.5" height="6.5" fill="#fff" stroke="#000" stroke-width="2"/></g>
<g transform="translate(133.6,321)"><path d="M6.2 5.2 C19 6 28 12 34.1 20.7" stroke="#000" stroke-width="2.2" fill="none"/><path d="M6.2 5.2 V36.7 L34.1 20.7" fill="none" stroke="#777" stroke-width="1.5"/><rect x="2.95" y="1.9500000000000002" width="6.5" height="6.5" fill="#fff" stroke="#000" stroke-width="2"/><rect x="30.85" y="17.45" width="6.5" height="6.5" fill="#fff" stroke="#000" stroke-width="2"/><rect x="2.95" y="33.45" width="6.5" height="6.5" fill="#fff" stroke="#000" stroke-width="2"/></g>
<g transform="translate(190,321)"><rect x="3.3" y="10" width="33.4" height="21.4" stroke="#000" stroke-width="2.2" fill="none"/><rect x="0.6499999999999999" y="27.55" width="6.5" height="6.5" fill="#fff" stroke="#000" stroke-width="2"/><rect x="32.45" y="7.85" width="6.5" height="6.5" fill="#fff" stroke="#000" stroke-width="2"/></g>
<g transform="translate(21,377)"><path d="M3.3 19 L12.5 5 H27.5 L35.4 19 L27.5 34.3 H12.5 Z" fill="none" stroke="#000" stroke-width="2"/><path d="M20.9 18.8 H34.8" stroke="#777" stroke-width="1.5"/><rect x="17.65" y="15.55" width="6.5" height="6.5" fill="#fff" stroke="#000" stroke-width="2"/><rect x="31.549999999999997" y="15.55" width="6.5" height="6.5" fill="#fff" stroke="#000" stroke-width="2"/></g>
<g transform="translate(77.3,377)"><path d="M18 3.8 H37.5 V17" fill="none" stroke="#888" stroke-width="1.4"/><path d="M4.5 4.5 H18 C30 4.5 36.5 12 36.5 24 V34.9" fill="none" stroke="#222" stroke-width="3.4"/><rect x="1.25" y="1.25" width="6.5" height="6.5" fill="#fff" stroke="#000" stroke-width="2"/><rect x="33.25" y="31.65" width="6.5" height="6.5" fill="#fff" stroke="#000" stroke-width="2"/></g>
<g transform="translate(133.6,377)"><path d="M12.1 5.1 L36.5 5.1 L26.4 37.3 L4.4 27.2 Z" fill="url(#gBlue)" stroke="#000" stroke-width="2"/><path d="M24 7.5 L15.7 30.1 M8.5 15.9 L29.4 20.6" stroke="#333" stroke-width="1.6"/><rect x="8.85" y="1.8499999999999996" width="6.5" height="6.5" fill="#fff" stroke="#000" stroke-width="2"/><rect x="33.25" y="1.8499999999999996" width="6.5" height="6.5" fill="#fff" stroke="#000" stroke-width="2"/><rect x="1.1500000000000004" y="23.95" width="6.5" height="6.5" fill="#fff" stroke="#000" stroke-width="2"/><rect x="23.15" y="34.05" width="6.5" height="6.5" fill="#fff" stroke="#000" stroke-width="2"/></g>
<g transform="translate(190,377)"><path d="M22.4 4.5 C30 7 34.3 12 34.3 17 L34.9 30.1 L21.2 39.7 V28 C20 22 15 17 1 11.7 L14.6 2.2 Z" fill="url(#gBlue)" stroke="#000" stroke-width="2"/><path d="M1 11.7 L14.6 2.2 L22.4 4.5 L12 14.6 Z" fill="#fff" stroke="#000" stroke-width="1.6"/><path d="M21.2 28 L34.5 19" stroke="#000" stroke-width="1.6"/><path d="M21.2 28 L34.9 30.1 L21.2 39.7 Z" fill="#fff" stroke="#000" stroke-width="1.6"/></g>
<g transform="translate(21,433)"><path d="M3.3 11.4 L17 1.3 L36.6 7.2 V28 L22.9 37.6 L3.3 31 Z" fill="#5c7af0" stroke="#000" stroke-width="2"/><path d="M3.3 11.4 L17 1.3 L36.6 7.2 L22.9 13.8 Z" fill="#b4c2ff"/><path d="M22.9 13.8 L36.6 7.2 V28 L22.9 37.6 Z" fill="#3a52c0"/><path d="M3.3 11.4 L17 1.3 L36.6 7.2 V28 L22.9 37.6 L3.3 31 Z" fill="none" stroke="#000" stroke-width="2"/></g>
<g transform="translate(77.3,433)"><circle cx="27.9" cy="13.8" r="14" fill="url(#gBall)" stroke="#000" stroke-width="2.2"/><path d="M13.9 15 C20 18 34 18 41.9 13 M27 0 C22 8 22 20 28.5 27.8" fill="none" stroke="#223" stroke-width="1.5"/><circle cx="13.7" cy="28" r="14" fill="url(#gBall)" stroke="#000" stroke-width="2.2"/><path d="M-0.3 29 C6 32 20 32 27.7 27 M13 14 C8 22 8 34 14 42" fill="none" stroke="#223" stroke-width="1.5"/></g>
<g transform="translate(133.6,433)"><ellipse cx="20.4" cy="4.9" rx="11.6" ry="5.4" fill="none" stroke="#000" stroke-width="2"/><path d="M-1 15.6 C10 22 31 22 41.3 15.6 V36.8 C31 44 10 44 -1 36.8 Z" fill="url(#gBlueD)" stroke="#000" stroke-width="2"/><ellipse cx="20.4" cy="31.6" rx="11" ry="6" fill="#a8b8ff" stroke="#fff" stroke-width="3"/></g>
<g transform="translate(190,433)"><path d="M17.6 1.3 L41.4 10.8 C34 20 30 30 22.4 40 L-1.4 31 C8 22 12 12 17.6 1.3 Z" fill="url(#gBlue)" stroke="#000" stroke-width="2"/><path d="M5 22 L34 30 M10 11 L39 20 M23 4 L10 36 M33 8 L18 39 M13 4 L36 28 M6 20 L28 38" stroke="#1a2a70" stroke-width="1.3"/></g>
<g transform="translate(21,489)"><path d="M-0.5 14 L6 9 L4 5 L9 -0.5 L13 3 L19 1 L22 6 L27 8 L24 14 L27 20 L20 26 L15 23 L10 26 L6 21 L0 20 Z" fill="url(#gOrange)" stroke="#000" stroke-width="1.8"/><path d="M13 22 L20 14 L24 17 L29 15 L31 20 L37 23 L35 28 L42 33 L36 40 L31 38 L26 43 L20 37 L22 32 L16 28 Z" fill="#fff" stroke="#000" stroke-width="1.8"/></g>
<g transform="translate(77.3,489)"><path d="M-1.2 20.3 L7.7 3 L7.7 29.8 L35.1 2.4 L22 30.4 L42.2 31.6 L22.2 39.8 L28.2 42.8 H-1.2 Z" fill="url(#gOrange)" stroke="#000" stroke-width="1.8" stroke-linejoin="miter"/></g>
<g transform="translate(133.6,489)"><rect x="-1" y="19.7" width="20.2" height="10.1" fill="#fff" stroke="#000" stroke-width="2"/><path d="M19.7 2.9 H33.3 L19.8 29.8 Z" fill="#17287e"/><path d="M20.4 29.8 L27.5 22.6 L38.9 34.5 L31.7 42.3 Z" fill="#fff" stroke="#000" stroke-width="2"/></g>
<g transform="translate(190,489)"><rect x="0.4" y="23.3" width="37.5" height="11.3" fill="#fff" stroke="#000" stroke-width="2"/><path d="M20 7.2 H33.7 L20.6 34.6 Z" fill="#17287e"/></g>
<g transform="translate(21,545)"><circle cx="22.1" cy="13.7" r="12" fill="#000"/><circle cx="15" cy="26.2" r="11" fill="#000"/><circle cx="29.3" cy="26.2" r="11" fill="#000"/><circle cx="22.1" cy="13.7" r="8.5" fill="#6a88f0"/><circle cx="15" cy="27" r="7" fill="#fff"/><circle cx="29.3" cy="27" r="7" fill="#17287e"/></g>
<g transform="translate(77.3,545)"><circle cx="20.8" cy="12.5" r="7.2" fill="#6a88f0" stroke="#000" stroke-width="1.8"/><circle cx="10.7" cy="28.6" r="7.2" fill="#fff" stroke="#000" stroke-width="1.8"/><circle cx="30.9" cy="28.6" r="7.2" fill="#17287e" stroke="#000" stroke-width="1.8"/></g>
<g transform="translate(133.6,545)"><path d="M-1 12 C8 8 24 12 30 30 L29.5 41.7" fill="none" stroke="#222" stroke-width="3.5"/><rect x="7.050000000000001" y="7.449999999999999" width="6.5" height="6.5" fill="#fff" stroke="#000" stroke-width="2"/><rect x="27.35" y="27.65" width="6.5" height="6.5" fill="#fff" stroke="#000" stroke-width="2"/></g>
<g transform="translate(190,545)"><path d="M-1.4 12.5 C14 6 29 18 29.5 41.7" fill="none" stroke="#111" stroke-width="3.8"/><path d="M-1.4 3.6 H12 M17 4 C26 9 34 16 37.9 26.8 M36.8 30 V43" fill="none" stroke="#000" stroke-width="2" stroke-dasharray="2.2 2.6"/><rect x="10.85" y="-0.25" width="6.5" height="6.5" fill="#fff" stroke="#000" stroke-width="2"/><rect x="34.65" y="23.55" width="6.5" height="6.5" fill="#fff" stroke="#000" stroke-width="2"/></g>
<g transform="translate(21,601)"><path d="M3.5 5 L8 1 L36.6 8 V21 L32 18 L28 15.5 L24 15 L21.5 38 L26.5 41 L23 44 L7 37 L12 35 L15 13 L9 11 L5.5 15 Z" fill="url(#gBlue)" stroke="#000" stroke-width="2"/><path d="M3.5 5 L32 12 L36.6 8" fill="none" stroke="#000" stroke-width="1.2"/></g>
<g transform="translate(77.3,601)"><rect x="3.3" y="25.5" width="12.7" height="12.7" fill="url(#gPage)" stroke="#000" stroke-width="2"/><rect x="27.1" y="0.9" width="13.5" height="13.5" fill="#7a94f4" stroke="#000" stroke-width="2"/><path d="M15.2 26.3 L26.4 15.2 M19.5 15.5 H26.5 V22.5" stroke="#000" stroke-width="1.8" fill="none"/></g>
<g transform="translate(133.6,601)"><rect x="2.6" y="0.9" width="13.5" height="13.5" fill="#7a94f4" stroke="#000" stroke-width="2"/><rect x="26.4" y="7.3" width="13.5" height="13.4" fill="#7a94f4" stroke="#000" stroke-width="2"/><rect x="18.4" y="13.6" width="13.6" height="12.7" fill="#7a94f4" stroke="#000" stroke-width="2"/><rect x="2.6" y="25.5" width="13.5" height="12.7" fill="url(#gPage)" stroke="#000" stroke-width="2"/><rect x="26.4" y="29.5" width="13.5" height="12.7" fill="#7a94f4" stroke="#000" stroke-width="2"/></g>
<g transform="translate(190,601)"><rect x="-2.2" y="0.9" width="11.9" height="29.4" fill="url(#gPage)" stroke="#000" stroke-width="2"/><path d="M13.7 31 L35.1 11.2 L41.4 18.4 L20.8 39 Z" fill="url(#gBlue)" stroke="#000" stroke-width="2"/><path d="M9.7 4.9 C17 4 24 8 27.1 13.6 M23 13 L27.5 14 L28.5 9" stroke="#000" stroke-width="1.8" fill="none"/></g>
<g transform="translate(21,657)"><path d="M3.3 11.6 L18.4 2 L38.2 9.2 V28.2 L24.7 40.1 L3.3 29.8 Z" fill="#5c7af0" stroke="#000" stroke-width="2"/><path d="M3.3 11.6 L18.4 2 L38.2 9.2 L24 16 Z" fill="#b4c2ff"/><path d="M24 16 L38.2 9.2 V28.2 L24.7 40.1 Z" fill="#3a52c0"/><path d="M15.2 26.7 L24.7 24 V38.6 L15.2 36 Z" fill="#fff"/><path d="M24.7 24 L30 22 V34 L24.7 38.6 Z" fill="#ccc"/><path d="M3.3 11.6 L18.4 2 L38.2 9.2 V28.2 L24.7 40.1 L3.3 29.8 Z" fill="none" stroke="#000" stroke-width="2"/></g>
<g transform="translate(77.3,657)"><path d="M-0.6 33.8 L7.3 23.5 H42.2 L33.5 33.8 Z" fill="#7a94f4" stroke="#000" stroke-width="1.8"/><path d="M8.6 28.2 V8 M20.5 28.2 V8 M32.4 28.2 V8" stroke="#a09a94" stroke-width="3"/><path d="M4.6 9 L8.6 2.6 L12.6 9 Z M16.5 9 L20.5 2.6 L24.5 9 Z M28.4 9 L32.4 2.6 L36.4 9 Z" fill="#a09a94"/></g>
<g transform="translate(133.6,657)"><rect x="1.0" y="1.3" width="9.2" height="9.2" fill="#7a94f4" stroke="#000" stroke-width="2"/><rect x="1.0" y="15.200000000000001" width="9.2" height="9.2" fill="#7a94f4" stroke="#000" stroke-width="2"/><rect x="1.0" y="29.1" width="9.2" height="9.2" fill="#fff" stroke="#000" stroke-width="2"/><rect x="14.9" y="1.3" width="9.2" height="9.2" fill="#7a94f4" stroke="#000" stroke-width="2"/><rect x="14.9" y="15.200000000000001" width="9.2" height="9.2" fill="#7a94f4" stroke="#000" stroke-width="2"/><rect x="14.9" y="29.1" width="9.2" height="9.2" fill="#7a94f4" stroke="#000" stroke-width="2"/><rect x="28.8" y="1.3" width="9.2" height="9.2" fill="#7a94f4" stroke="#000" stroke-width="2"/><rect x="28.8" y="15.200000000000001" width="9.2" height="9.2" fill="#7a94f4" stroke="#000" stroke-width="2"/><rect x="28.8" y="29.1" width="9.2" height="9.2" fill="#7a94f4" stroke="#000" stroke-width="2"/></g>
<g transform="translate(190,657)"><rect x="10.5" y="1.3" width="19" height="11.1" fill="url(#gPage)" stroke="#000" stroke-width="2"/><rect x="14.5" y="15.6" width="11.1" height="8.7" fill="#fff" stroke="#000" stroke-width="2"/><rect x="12.1" y="27.4" width="15" height="12.7" fill="url(#gPage)" stroke="#000" stroke-width="2"/><line x1="20" y1="-1.1" x2="20" y2="42.5" stroke="#d02828" stroke-width="3"/></g>
<g transform="translate(21,713)"><path d="M0 12 L7 8 L16 11 V40 L0 32 Z" fill="#fff" stroke="#000" stroke-width="2"/><path d="M7 8 L11 2 L18 6 L16 11 Z" fill="#fff" stroke="#000" stroke-width="1.5"/><path d="M10 40 C14 30 17 18 21 8 L35 13 C31 24 27 34 24 44 Z" fill="url(#gBlue)" stroke="#000" stroke-width="2"/></g>
<g transform="translate(77.3,713)"><rect x="11.3" y="-0.8" width="7.1" height="43.7" fill="#7a94f4" stroke="#000" stroke-width="2"/><circle cx="1" cy="10.3" r="4.5" fill="#111"/><circle cx="28.7" cy="10.3" r="4.5" fill="#111"/><path d="M1 17 L3 29 L12 28 L9 42 M14 19 L3 18 M17 19 L26 17 L32 25 L32 34 L38 41" fill="none" stroke="#111" stroke-width="3.4"/></g>
<g transform="translate(133.6,713)"><path d="M1 25.4 L8.1 23 L10.5 31.8 L39.9 2.4 L11.3 39.7 Z" fill="#000"/></g>
<g transform="translate(190,713)"><path d="M0.2 12.7 L10.5 5.6 L24.8 10.3 V25.4 L14.4 31.8 L0.2 27 Z" fill="#c8c8c8" stroke="#000" stroke-width="2"/><path d="M0.2 12.7 L10.5 5.6 L24.8 10.3 L14.4 16.5 Z" fill="#eee"/><path d="M14.4 16.5 L24.8 10.3 V25.4 L14.4 31.8 Z" fill="#888"/><path d="M0.2 12.7 L10.5 5.6 L24.8 10.3 V25.4 L14.4 31.8 L0.2 27 Z" fill="none" stroke="#000" stroke-width="2"/><path d="M28.7 8 L39.8 30 C38 36 21 36 19.2 30 Z" fill="url(#gSph)" stroke="#000" stroke-width="2"/></g>
<g transform="translate(21,769)"><path d="M3.3 35.3 L20 15.4 L36.6 31.3 L23.9 42.4 Z" fill="#f8d870" stroke="#000" stroke-width="2"/><path d="M20 15.4 L23.9 42.4 L36.6 31.3 Z" fill="#c8a040"/><path d="M3.3 35.3 L20 15.4 L36.6 31.3 L23.9 42.4 Z" fill="none" stroke="#000" stroke-width="2"/><path d="M15.2 13 L22 4 L28 1 H38 V10 H31 L25 13 Z" fill="#fff" stroke="#000" stroke-width="1.6"/><path d="M18 12 L23 6 M21 12 L26 7" stroke="#000" stroke-width="1"/><rect x="37" y="-1.2" width="5" height="11.5" fill="#000"/></g>
<path d="M126.3 303 L126.3 314 L115.3 314 Z" fill="#5d5d5d"/>
<path d="M182.6 303 L182.6 314 L171.6 314 Z" fill="#5d5d5d"/>
<path d="M239 303 L239 314 L228 314 Z" fill="#5d5d5d"/>
<path d="M70 359 L70 370 L59 370 Z" fill="#5d5d5d"/>
<path d="M126.3 359 L126.3 370 L115.3 370 Z" fill="#5d5d5d"/>
<path d="M182.6 359 L182.6 370 L171.6 370 Z" fill="#5d5d5d"/>
<path d="M239 359 L239 370 L228 370 Z" fill="#5d5d5d"/>
<path d="M70 415 L70 426 L59 426 Z" fill="#5d5d5d"/>
<path d="M126.3 415 L126.3 426 L115.3 426 Z" fill="#5d5d5d"/>
<path d="M182.6 415 L182.6 426 L171.6 426 Z" fill="#5d5d5d"/>
<path d="M239 415 L239 426 L228 426 Z" fill="#5d5d5d"/>
<path d="M70 471 L70 482 L59 482 Z" fill="#5d5d5d"/>
<path d="M126.3 471 L126.3 482 L115.3 482 Z" fill="#5d5d5d"/>
<path d="M182.6 471 L182.6 482 L171.6 482 Z" fill="#5d5d5d"/>
<path d="M239 471 L239 482 L228 482 Z" fill="#5d5d5d"/>
<path d="M70 695 L70 706 L59 706 Z" fill="#5d5d5d"/>
<path d="M126.3 695 L126.3 706 L115.3 706 Z" fill="#5d5d5d"/>
<path d="M182.6 695 L182.6 706 L171.6 706 Z" fill="#5d5d5d"/>
<path d="M239 695 L239 706 L228 706 Z" fill="#5d5d5d"/>
<path d="M70 751 L70 762 L59 762 Z" fill="#5d5d5d"/>
<path d="M126.3 751 L126.3 762 L115.3 762 Z" fill="#5d5d5d"/>
<path d="M182.6 751 L182.6 762 L171.6 762 Z" fill="#5d5d5d"/>
<path d="M239 751 L239 762 L228 762 Z" fill="#5d5d5d"/>
<path d="M70 527 L70 538 L59 538 Z" fill="#5d5d5d"/>
<path d="M70 583 L70 594 L59 594 Z" fill="#5d5d5d"/>
<path d="M239 583 L239 594 L228 594 Z" fill="#5d5d5d"/>
<path d="M126.3 639 L126.3 650 L115.3 650 Z" fill="#5d5d5d"/>
<path d="M70 807 L70 818 L59 818 Z" fill="#5d5d5d"/>
<circle cx="40" cy="894" r="14" fill="none" stroke="#555" stroke-width="1.6"/><rect x="37" y="891" width="6" height="6" fill="#fff" stroke="#000" stroke-width="1.6"/><line x1="43" y1="894" x2="58" y2="894" stroke="#000" stroke-width="1.6"/>
<path d="M103.5 886 C103.5 883 122.5 883 122.5 886 L115.5 896 V904.5 C115.5 906.5 111 906.5 111 904.5 V896 Z" fill="url(#gGray)" stroke="#111" stroke-width="1.4"/><ellipse cx="113" cy="885.5" rx="8.5" ry="2" fill="none" stroke="#555" stroke-width="0.8"/><path d="M123.5 880.5 H127.5 V884.5 M100.3 903 V907 H104.5" fill="none" stroke="#000" stroke-width="1.6"/>
<g transform="translate(2249,210)"><path d="M1 1 H18 L22 5 V29 H1 Z" fill="url(#gPage)" stroke="#000" stroke-width="2"/><path d="M11 1 V29 M1 15 H22" stroke="#bbb" stroke-width="1"/><path d="M15 19 V29 M10 24 H20" stroke="#000" stroke-width="3"/></g>
<g transform="translate(2292,210)" opacity="0.45"><path d="M1 1 H12 L15 4 V22 H1 Z" fill="#fff" stroke="#666" stroke-width="1.8"/><path d="M9 8 H20 L23 11 V29 H9 Z" fill="#ddd" stroke="#666" stroke-width="1.8"/></g>
<path d="M2336 212 L2360 236 M2360 212 L2336 236" stroke="#b4b4b4" stroke-width="4"/><path d="M2336 212 L2360 236 M2360 212 L2336 236" stroke="#ececec" stroke-width="1.5"/>
<path d="M2379 229 L2392 214 L2405 229 Z" fill="#e0e0e0" stroke="#b0b0b0" stroke-width="2" stroke-linejoin="round"/>
<path d="M2423 218 L2449 218 L2436 233 Z" fill="#e0e0e0" stroke="#b0b0b0" stroke-width="2" stroke-linejoin="round"/>
<circle cx="2480" cy="224" r="10.9" fill="#c6c6c6"/><rect x="2476.95" y="209.50" width="6.09" height="14.50" rx="1.22" fill="#c6c6c6" transform="rotate(0 2480 224)"/><rect x="2476.95" y="209.50" width="6.09" height="14.50" rx="1.22" fill="#c6c6c6" transform="rotate(45 2480 224)"/><rect x="2476.95" y="209.50" width="6.09" height="14.50" rx="1.22" fill="#c6c6c6" transform="rotate(90 2480 224)"/><rect x="2476.95" y="209.50" width="6.09" height="14.50" rx="1.22" fill="#c6c6c6" transform="rotate(135 2480 224)"/><rect x="2476.95" y="209.50" width="6.09" height="14.50" rx="1.22" fill="#c6c6c6" transform="rotate(180 2480 224)"/><rect x="2476.95" y="209.50" width="6.09" height="14.50" rx="1.22" fill="#c6c6c6" transform="rotate(225 2480 224)"/><rect x="2476.95" y="209.50" width="6.09" height="14.50" rx="1.22" fill="#c6c6c6" transform="rotate(270 2480 224)"/><rect x="2476.95" y="209.50" width="6.09" height="14.50" rx="1.22" fill="#c6c6c6" transform="rotate(315 2480 224)"/><circle cx="2480" cy="224" r="4.8" fill="#ececec"/>
<g transform="translate(2510,211) scale(0.7)"><path d="M8 20 C8 10 10 3 14 1.5 H36 C32 6 30 12 30 20 Z" fill="#fff" stroke="#000" stroke-width="2.4"/><path d="M2 22 L8 17 H38 V31 L33 36 H4 L2 34 Z" fill="#6a6a6a" stroke="#000" stroke-width="2.4"/><rect x="2" y="22" width="31" height="7" fill="#e8e8e8" stroke="#000" stroke-width="2"/><rect x="4" y="30" width="29" height="6" fill="#a5a5a5" stroke="#000" stroke-width="2"/></g>
<g transform="translate(2553,216) scale(0.72)"><path d="M1.5 28.5 V5 L5 1.5 H15 L18.5 4.5 H31 L33 6.5 V11" fill="url(#gFoldB)" stroke="#000" stroke-width="2.6"/><path d="M1.5 28.5 L9 10.5 H40.5 L33 28.5 Z" fill="url(#gFold)" stroke="#000" stroke-width="2.6"/></g>
<g transform="translate(2597,209) scale(0.73)"><circle cx="20" cy="20" r="19.8" fill="url(#gHelp)"/><text x="20" y="34" text-anchor="middle" font-family="Liberation Serif" font-weight="bold" font-size="42" fill="#fff">?</text></g>
<circle cx="2264" cy="275" r="8" fill="none" stroke="#111" stroke-width="2.4"/><line x1="2270" y1="281" x2="2277" y2="289" stroke="#111" stroke-width="2.6" stroke-linecap="round"/>
<g transform="translate(2843,207)"><path d="M1 1 H19 L23 5 V29 H1 Z" fill="#fff" stroke="#000" stroke-width="2"/><path d="M12 6 V29 M1 15 H23" stroke="#666" stroke-width="1.2"/></g>
<g transform="translate(2841,281) scale(0.72)"><path d="M1 1 L36 8 L34 28 L17 37 L2 22 Z" fill="#222"/><path d="M3 4 L34 10 L33 16 L18 20 Z" fill="#ff8a4a"/><path d="M4 13 L18 21 L33 16 V22 L18 27 L5 18 Z" fill="#e82020"/><path d="M5 18 L18 27 L33 22 V25 L18 30 L6 21 Z" fill="#ddd"/><path d="M6 21 L18 30 L33 25 V27 L17 35 L7 25 Z" fill="#2850c8"/></g>
<g transform="translate(2841,353) scale(0.66)"><circle cx="20" cy="20" r="19.1" fill="#000"/><polygon points="20.00,2.50 22.62,2.70 21.47,10.31 20.00,10.20" fill="#ff0000"/><polygon points="22.28,2.65 24.86,3.19 22.72,10.59 21.28,10.28" fill="#ff1f00"/><polygon points="24.53,3.10 27.01,3.97 23.93,11.02 22.54,10.53" fill="#ff3f00"/><polygon points="26.70,3.83 29.05,5.02 25.07,11.61 23.75,10.95" fill="#ff5f00"/><polygon points="28.75,4.84 30.92,6.33 26.12,12.34 24.90,11.51" fill="#ff7f00"/><polygon points="30.65,6.12 32.61,7.87 27.06,13.21 25.97,12.23" fill="#ff9f00"/><polygon points="32.37,7.63 34.09,9.62 27.89,14.19 26.93,13.07" fill="#ffbf00"/><polygon points="33.88,9.35 35.32,11.55 28.58,15.27 27.77,14.03" fill="#ffdf00"/><polygon points="35.16,11.25 36.30,13.62 29.13,16.43 28.49,15.10" fill="#ffff00"/><polygon points="36.17,13.30 36.99,15.80 29.51,17.65 29.05,16.25" fill="#dfff00"/><polygon points="36.90,15.47 37.39,18.06 29.74,18.91 29.47,17.46" fill="#bfff00"/><polygon points="37.35,17.72 37.50,20.34 29.80,20.19 29.72,18.72" fill="#9fff00"/><polygon points="37.50,20.00 37.30,22.62 29.69,21.47 29.80,20.00" fill="#7fff00"/><polygon points="37.35,22.28 36.81,24.86 29.41,22.72 29.72,21.28" fill="#5fff00"/><polygon points="36.90,24.53 36.03,27.01 28.98,23.93 29.47,22.54" fill="#3fff00"/><polygon points="36.17,26.70 34.98,29.05 28.39,25.07 29.05,23.75" fill="#1fff00"/><polygon points="35.16,28.75 33.67,30.92 27.66,26.12 28.49,24.90" fill="#00ff00"/><polygon points="33.88,30.65 32.13,32.61 26.79,27.06 27.77,25.97" fill="#00ff1f"/><polygon points="32.37,32.37 30.38,34.09 25.81,27.89 26.93,26.93" fill="#00ff3f"/><polygon points="30.65,33.88 28.45,35.32 24.73,28.58 25.97,27.77" fill="#00ff5f"/><polygon points="28.75,35.16 26.38,36.30 23.57,29.13 24.90,28.49" fill="#00ff7f"/><polygon points="26.70,36.17 24.20,36.99 22.35,29.51 23.75,29.05" fill="#00ff9f"/><polygon points="24.53,36.90 21.94,37.39 21.09,29.74 22.54,29.47" fill="#00ffbf"/><polygon points="22.28,37.35 19.66,37.50 19.81,29.80 21.28,29.72" fill="#00ffdf"/><polygon points="20.00,37.50 17.38,37.30 18.53,29.69 20.00,29.80" fill="#00ffff"/><polygon points="17.72,37.35 15.14,36.81 17.28,29.41 18.72,29.72" fill="#00dfff"/><polygon points="15.47,36.90 12.99,36.03 16.07,28.98 17.46,29.47" fill="#00bfff"/><polygon points="13.30,36.17 10.95,34.98 14.93,28.39 16.25,29.05" fill="#009fff"/><polygon points="11.25,35.16 9.08,33.67 13.88,27.66 15.10,28.49" fill="#007fff"/><polygon points="9.35,33.88 7.39,32.13 12.94,26.79 14.03,27.77" fill="#005fff"/><polygon points="7.63,32.37 5.91,30.38 12.11,25.81 13.07,26.93" fill="#003fff"/><polygon points="6.12,30.65 4.68,28.45 11.42,24.73 12.23,25.97" fill="#001fff"/><polygon points="4.84,28.75 3.70,26.38 10.87,23.57 11.51,24.90" fill="#0000ff"/><polygon points="3.83,26.70 3.01,24.20 10.49,22.35 10.95,23.75" fill="#1f00ff"/><polygon points="3.10,24.53 2.61,21.94 10.26,21.09 10.53,22.54" fill="#3f00ff"/><polygon points="2.65,22.28 2.50,19.66 10.20,19.81 10.28,21.28" fill="#5f00ff"/><polygon points="2.50,20.00 2.70,17.38 10.31,18.53 10.20,20.00" fill="#7f00ff"/><polygon points="2.65,17.72 3.19,15.14 10.59,17.28 10.28,18.72" fill="#9f00ff"/><polygon points="3.10,15.47 3.97,12.99 11.02,16.07 10.53,17.46" fill="#bf00ff"/><polygon points="3.83,13.30 5.02,10.95 11.61,14.93 10.95,16.25" fill="#df00ff"/><polygon points="4.84,11.25 6.33,9.08 12.34,13.88 11.51,15.10" fill="#ff00ff"/><polygon points="6.12,9.35 7.87,7.39 13.21,12.94 12.23,14.03" fill="#ff00df"/><polygon points="7.63,7.63 9.62,5.91 14.19,12.11 13.07,13.07" fill="#ff00bf"/><polygon points="9.35,6.12 11.55,4.68 15.27,11.42 14.03,12.23" fill="#ff009f"/><polygon points="11.25,4.84 13.62,3.70 16.43,10.87 15.10,11.51" fill="#ff007f"/><polygon points="13.30,3.83 15.80,3.01 17.65,10.49 16.25,10.95" fill="#ff005f"/><polygon points="15.47,3.10 18.06,2.61 18.91,10.26 17.46,10.53" fill="#ff003f"/><polygon points="17.72,2.65 20.34,2.50 20.19,10.20 18.72,10.28" fill="#ff001f"/><circle cx="20" cy="20" r="9.8" fill="#fff"/></g>
<path d="M2839 436 L2854 430 L2869 436 L2854 442 Z" fill="#111"/><path d="M2846 439 V445 C2850 448 2858 448 2862 445 V439 L2854 442 Z" fill="#333"/><path d="M2841 437 V447" stroke="#111" stroke-width="1.5"/>
<rect x="284.5" y="1470.5" width="29" height="26" fill="none" stroke="#2a7af5" stroke-width="1.6"/><path d="M299 1470.5 V1496.5 M284.5 1483.5 H313.5" stroke="#2a7af5" stroke-width="1.6"/><path d="M286 1472 H291 M300 1472 H305 M286 1485 H291 M300 1485 H305" stroke="#2a7af5" stroke-width="2"/>
<rect x="348.5" y="1470.5" width="29" height="26" fill="none" stroke="#777" stroke-width="1.6"/><path d="M350 1472 H355" stroke="#777" stroke-width="2"/>
<rect x="18" y="1760" width="20" height="20" fill="none" stroke="#505050" stroke-width="4"/>
<path d="M62 1758 H82 M62 1770 H82 M62 1782 H82" stroke="#555" stroke-width="3" stroke-linecap="round"/><circle cx="55.5" cy="1758" r="1.6" fill="#555"/><circle cx="55.5" cy="1770" r="1.6" fill="#555"/><circle cx="55.5" cy="1782" r="1.6" fill="#555"/>
<path d="M1970.8 1766.5 V1761.5 C1970.8 1755.5 1980.3 1755.5 1980.3 1761.5 V1766.5" fill="none" stroke="#8e8e8e" stroke-width="1.7"/><rect x="1967.3" y="1766.5" width="16.5" height="15" rx="2" fill="#e4e4e4" stroke="#8e8e8e" stroke-width="1.6"/>
<rect x="2841.5" y="1760.5" width="20" height="19" fill="none" stroke="#505050" stroke-width="4"/>
<path d="M336.5 164.0 L352.5 164.0 L344.5 172.5 Z" fill="#fff"/>
<path d="M1422.5 163.75 L1438.5 163.75 L1430.5 172.25 Z" fill="#fff"/>
<path d="M356.5 832.0 L372.5 832.0 L364.5 840.5 Z" fill="#fff"/>
<path d="M1344.5 830.0 L1360.5 830.0 L1352.5 838.5 Z" fill="#fff"/>
</svg></body></html>
